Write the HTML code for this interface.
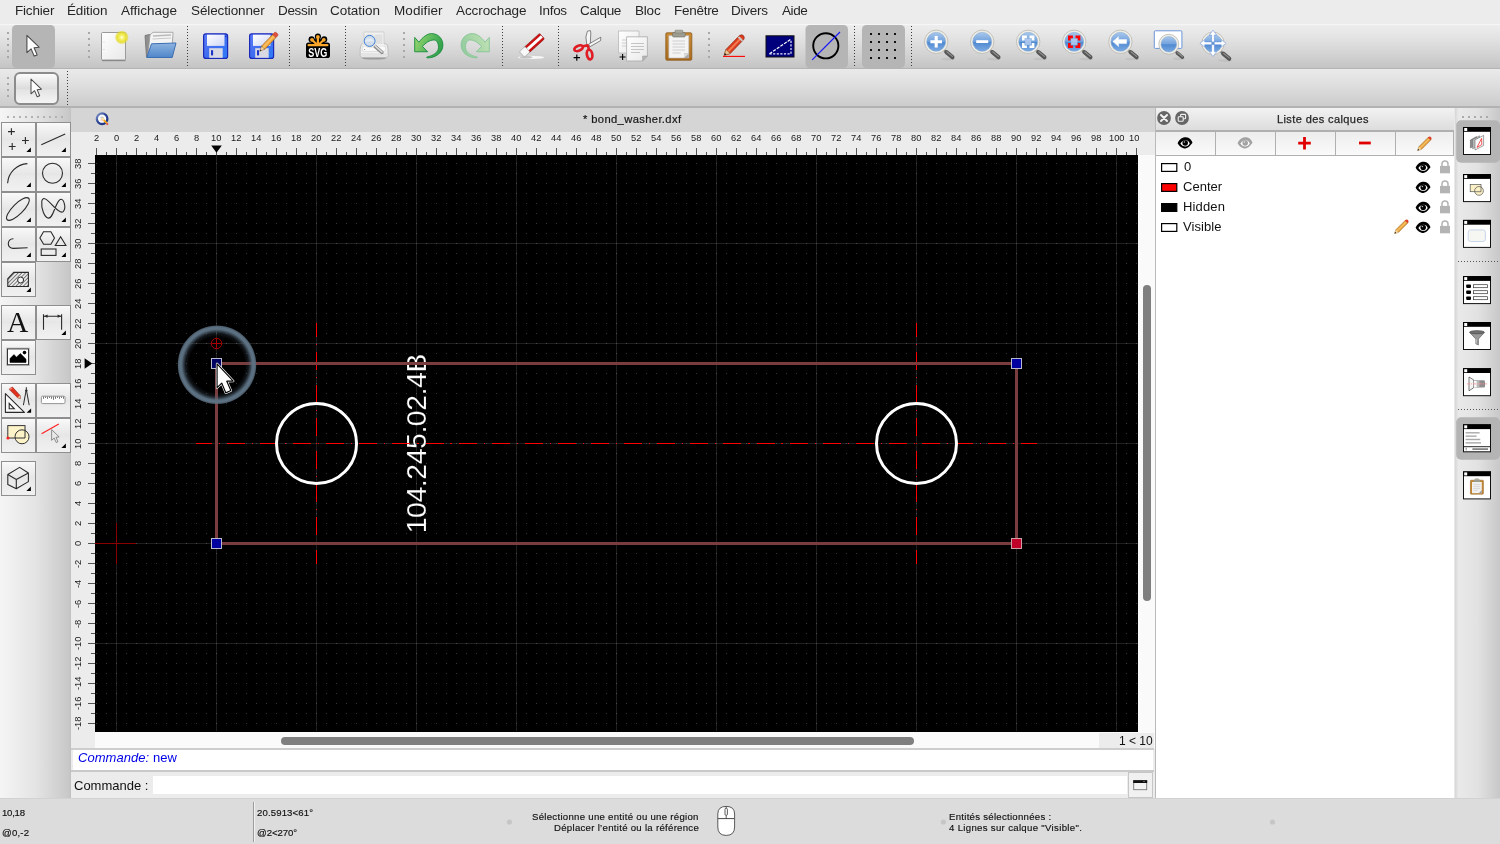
<!DOCTYPE html>
<html><head><meta charset="utf-8"><title>QCAD</title>
<style>
html,body{margin:0;padding:0;}
body{width:1500px;height:844px;overflow:hidden;background:#ececec;position:relative;font-family:"Liberation Sans",sans-serif;}
.t{position:absolute;white-space:nowrap;will-change:transform;}
.a{position:absolute;}
svg{position:absolute;overflow:visible;will-change:transform;}
</style></head><body>
<div class="a" style="left:0;top:0;width:1500px;height:24px;background:#ececec;"></div>
<span class="t" style="left:14.60px;top:1.82px;font-size:13.5px;line-height:18px;color:#262626;font-family:'Liberation Sans',sans-serif;letter-spacing:-0.187px;">Fichier</span>
<span class="t" style="left:67.20px;top:1.82px;font-size:13.5px;line-height:18px;color:#262626;font-family:'Liberation Sans',sans-serif;letter-spacing:-0.140px;">Édition</span>
<span class="t" style="left:121.00px;top:1.82px;font-size:13.5px;line-height:18px;color:#262626;font-family:'Liberation Sans',sans-serif;letter-spacing:-0.005px;">Affichage</span>
<span class="t" style="left:190.70px;top:1.82px;font-size:13.5px;line-height:18px;color:#262626;font-family:'Liberation Sans',sans-serif;letter-spacing:-0.121px;">Sélectionner</span>
<span class="t" style="left:277.80px;top:1.82px;font-size:13.5px;line-height:18px;color:#262626;font-family:'Liberation Sans',sans-serif;letter-spacing:-0.344px;">Dessin</span>
<span class="t" style="left:330.40px;top:1.82px;font-size:13.5px;line-height:18px;color:#262626;font-family:'Liberation Sans',sans-serif;letter-spacing:-0.048px;">Cotation</span>
<span class="t" style="left:393.50px;top:1.82px;font-size:13.5px;line-height:18px;color:#262626;font-family:'Liberation Sans',sans-serif;letter-spacing:0.085px;">Modifier</span>
<span class="t" style="left:455.70px;top:1.82px;font-size:13.5px;line-height:18px;color:#262626;font-family:'Liberation Sans',sans-serif;letter-spacing:-0.089px;">Accrochage</span>
<span class="t" style="left:539.30px;top:1.82px;font-size:13.5px;line-height:18px;color:#262626;font-family:'Liberation Sans',sans-serif;letter-spacing:-0.294px;">Infos</span>
<span class="t" style="left:580.30px;top:1.82px;font-size:13.5px;line-height:18px;color:#262626;font-family:'Liberation Sans',sans-serif;letter-spacing:-0.280px;">Calque</span>
<span class="t" style="left:634.60px;top:1.82px;font-size:13.5px;line-height:18px;color:#262626;font-family:'Liberation Sans',sans-serif;letter-spacing:-0.191px;">Bloc</span>
<span class="t" style="left:673.60px;top:1.82px;font-size:13.5px;line-height:18px;color:#262626;font-family:'Liberation Sans',sans-serif;letter-spacing:-0.275px;">Fenêtre</span>
<span class="t" style="left:731.40px;top:1.82px;font-size:13.5px;line-height:18px;color:#262626;font-family:'Liberation Sans',sans-serif;letter-spacing:-0.259px;">Divers</span>
<span class="t" style="left:781.60px;top:1.82px;font-size:13.5px;line-height:18px;color:#262626;font-family:'Liberation Sans',sans-serif;letter-spacing:-0.380px;">Aide</span>
<div class="a" style="left:0;top:24px;width:1500px;height:44px;background:linear-gradient(#ededed 0%,#e3e3e3 30%,#d2d2d2 70%,#c4c4c4 100%);border-top:1px solid #f6f6f6;box-sizing:border-box;"></div>
<div class="a" style="left:0;top:68px;width:1500px;height:1px;background:#b4b4b4;"></div>
<div class="a" style="left:0;top:69px;width:1500px;height:38px;background:linear-gradient(#eaeaea 0%,#dfdfdf 40%,#cbcbcb 100%);"></div>
<div class="a" style="left:0;top:106px;width:1500px;height:2px;background:#b2b2b2;"></div>
<div class="a" style="left:0;top:108px;width:71.2px;height:690px;background:linear-gradient(90deg,#f5f5f5,#e4e4e4 50%,#c8c8c8 97%,#c0c0c0);"></div>
<div class="a" style="left:71.2px;top:108px;width:1083.8px;height:24px;background:#d5d5d5;"></div>
<span class="t" style="left:582.70px;top:112.22px;font-size:11.2px;line-height:15px;color:#161616;font-family:'Liberation Sans',sans-serif;letter-spacing:0.373px;-webkit-text-stroke:0.2px #161616;">* bond_washer.dxf</span>
<svg style="left:90px;top:108px" width="28" height="24"><defs><linearGradient id="qring" x1="0" y1="0" x2="1" y2="1"><stop offset="0" stop-color="#8a9ccc"/><stop offset="0.45" stop-color="#2a4594"/><stop offset="1" stop-color="#1a3282"/></linearGradient></defs><circle cx="12.1" cy="10.7" r="5.3" fill="#fafafa" stroke="url(#qring)" stroke-width="2.3"/><path d="M10 9.6 h4 M12 8 v3.4" stroke="#aaa" stroke-width="0.5"/><path d="M10.4 12 h2.6" stroke="#e88" stroke-width="0.5"/><path d="M12.6 11 L17 15.4" stroke="#f2a51e" stroke-width="1.9" stroke-linecap="round"/><path d="M12.4 10.8 L13.4 11.8" stroke="#fbe9b0" stroke-width="1.6" stroke-linecap="round"/><circle cx="17.3" cy="16.1" r="1.15" fill="#e35a5a"/></svg>
<div class="a" style="left:71.2px;top:132px;width:1083.8px;height:23px;background:#ececec;"></div>
<div class="a" style="left:71.2px;top:132px;width:23.8px;height:617px;background:#ececec;"></div>
<div class="a" style="left:1138px;top:155px;width:17px;height:594px;background:#fafafa;"></div>
<div class="a" style="left:95px;top:731px;width:1043px;height:18px;background:#fafafa;"></div>
<div class="a" style="left:95px;top:155px;width:1043px;height:577px;background:#000;"></div>
<div class="a" style="left:0;top:798px;width:1500px;height:46px;background:#dcdcdc;"></div>
<svg style="left:0;top:0" width="1500" height="108"><defs>
<linearGradient id="btn2" x1="0" y1="0" x2="0" y2="1"><stop offset="0" stop-color="#fefefe"/><stop offset="0.5" stop-color="#dcdcdc"/><stop offset="0.55" stop-color="#e4e4e4"/><stop offset="1" stop-color="#f6f6f6"/></linearGradient>
<linearGradient id="paper" x1="0" y1="0" x2="1" y2="1"><stop offset="0" stop-color="#ffffff"/><stop offset="1" stop-color="#e8e8e8"/></linearGradient>
<radialGradient id="yglow"><stop offset="0" stop-color="#ffffe8"/><stop offset="0.25" stop-color="#f8f47a"/><stop offset="0.6" stop-color="#ebe330" stop-opacity="0.95"/><stop offset="0.85" stop-color="#e2d820" stop-opacity="0.6"/><stop offset="1" stop-color="#e0d400" stop-opacity="0"/></radialGradient>
<linearGradient id="folderb" x1="0" y1="0" x2="0" y2="1"><stop offset="0" stop-color="#8fb4e0"/><stop offset="1" stop-color="#4f86c9"/></linearGradient>
<linearGradient id="flop" x1="0" y1="0" x2="1" y2="1"><stop offset="0" stop-color="#5d7cf5"/><stop offset="0.5" stop-color="#3f6df0"/><stop offset="1" stop-color="#2d7df8"/></linearGradient>
<linearGradient id="floplabel" x1="0" y1="0" x2="1" y2="1"><stop offset="0" stop-color="#ffffff"/><stop offset="1" stop-color="#cfd6f6"/></linearGradient>
<linearGradient id="undog" x1="0" y1="0.3" x2="1" y2="0.7"><stop offset="0" stop-color="#93d36c"/><stop offset="0.55" stop-color="#52b55a"/><stop offset="1" stop-color="#2a9e48"/></linearGradient>
<linearGradient id="redog" x1="0" y1="0.3" x2="1" y2="0.7"><stop offset="0" stop-color="#bfe0b4"/><stop offset="0.55" stop-color="#a6d5a6"/><stop offset="1" stop-color="#90c99c"/></linearGradient>
<radialGradient id="lens" cx="0.5" cy="0.3" r="0.8"><stop offset="0" stop-color="#9fc2ea"/><stop offset="0.6" stop-color="#5b93d6"/><stop offset="1" stop-color="#3f7bc7"/></radialGradient>
<linearGradient id="lens2" x1="0" y1="0" x2="0" y2="1"><stop offset="0" stop-color="#a9c8ec"/><stop offset="0.5" stop-color="#6fa0dc"/><stop offset="0.52" stop-color="#5089d0"/><stop offset="1" stop-color="#7aaae2"/></linearGradient>
<linearGradient id="clip" x1="0" y1="0" x2="0" y2="1"><stop offset="0" stop-color="#c98a35"/><stop offset="1" stop-color="#a8691c"/></linearGradient>
</defs><rect x="12" y="25" width="43" height="43" rx="4.5" fill="#b5b5b5"/><rect x="805.5" y="25" width="42.5" height="43" rx="4.5" fill="#b5b5b5"/><rect x="862" y="25" width="43" height="43" rx="4.5" fill="#b5b5b5"/><rect x="15" y="73" width="43" height="31" rx="5" fill="url(#btn2)" stroke="#8c8c8c" stroke-width="2"/><rect x="7" y="32" width="2" height="2" fill="#a8a8a8"/><rect x="7" y="38" width="2" height="2" fill="#a8a8a8"/><rect x="7" y="44" width="2" height="2" fill="#a8a8a8"/><rect x="7" y="50" width="2" height="2" fill="#a8a8a8"/><rect x="7" y="56" width="2" height="2" fill="#a8a8a8"/><rect x="88" y="32" width="2" height="2" fill="#a8a8a8"/><rect x="88" y="38" width="2" height="2" fill="#a8a8a8"/><rect x="88" y="44" width="2" height="2" fill="#a8a8a8"/><rect x="88" y="50" width="2" height="2" fill="#a8a8a8"/><rect x="88" y="56" width="2" height="2" fill="#a8a8a8"/><rect x="403" y="32" width="2" height="2" fill="#a8a8a8"/><rect x="403" y="38" width="2" height="2" fill="#a8a8a8"/><rect x="403" y="44" width="2" height="2" fill="#a8a8a8"/><rect x="403" y="50" width="2" height="2" fill="#a8a8a8"/><rect x="403" y="56" width="2" height="2" fill="#a8a8a8"/><rect x="708" y="32" width="2" height="2" fill="#a8a8a8"/><rect x="708" y="38" width="2" height="2" fill="#a8a8a8"/><rect x="708" y="44" width="2" height="2" fill="#a8a8a8"/><rect x="708" y="50" width="2" height="2" fill="#a8a8a8"/><rect x="708" y="56" width="2" height="2" fill="#a8a8a8"/><rect x="7" y="77" width="2" height="2" fill="#a8a8a8"/><rect x="7" y="83" width="2" height="2" fill="#a8a8a8"/><rect x="7" y="89" width="2" height="2" fill="#a8a8a8"/><rect x="7" y="95" width="2" height="2" fill="#a8a8a8"/><line x1="187.5" y1="26" x2="187.5" y2="66" stroke="#3c3c3c" stroke-width="1" stroke-dasharray="1 2" shape-rendering="crispEdges"/><line x1="289.5" y1="26" x2="289.5" y2="66" stroke="#3c3c3c" stroke-width="1" stroke-dasharray="1 2" shape-rendering="crispEdges"/><line x1="345.5" y1="26" x2="345.5" y2="66" stroke="#3c3c3c" stroke-width="1" stroke-dasharray="1 2" shape-rendering="crispEdges"/><line x1="502.5" y1="26" x2="502.5" y2="66" stroke="#3c3c3c" stroke-width="1" stroke-dasharray="1 2" shape-rendering="crispEdges"/><line x1="558.5" y1="26" x2="558.5" y2="66" stroke="#3c3c3c" stroke-width="1" stroke-dasharray="1 2" shape-rendering="crispEdges"/><line x1="854.5" y1="26" x2="854.5" y2="66" stroke="#3c3c3c" stroke-width="1" stroke-dasharray="1 2" shape-rendering="crispEdges"/><line x1="911.5" y1="26" x2="911.5" y2="66" stroke="#3c3c3c" stroke-width="1" stroke-dasharray="1 2" shape-rendering="crispEdges"/><line x1="67.5" y1="71" x2="67.5" y2="105" stroke="#3c3c3c" stroke-width="1" stroke-dasharray="1 2" shape-rendering="crispEdges"/><path transform="translate(26.9,35.3) scale(1.0)" d="M0 0 L0 17.3 L4.2 13.6 L7.3 20.8 L10.2 19.6 L7.2 12.4 L12.2 11.9 Z" fill="#fff" stroke="#4a4a4a" stroke-width="1.1" stroke-linejoin="round"/><path transform="translate(31,79.1) scale(0.85)" d="M0 0 L0 17.3 L4.2 13.6 L7.3 20.8 L10.2 19.6 L7.2 12.4 L12.2 11.9 Z" fill="#fff" stroke="#4a4a4a" stroke-width="1.1764705882352942" stroke-linejoin="round"/><g><rect x="101.5" y="32.5" width="24" height="27.5" rx="1" fill="url(#paper)" stroke="#9a9a9a" stroke-width="1"/><path d="M102 60.6 h23.5" stroke="#8a8a8a" stroke-width="1.2"/><rect x="103.3" y="41.5" width="1.2" height="0.8" fill="#c8c8c8"/><rect x="103.3" y="49" width="1.2" height="0.8" fill="#c8c8c8"/><circle cx="121.8" cy="37.4" r="7" fill="url(#yglow)"/></g><g>
<path d="M145 35.5 L149.5 34.5 L152 36 L172 36 L172 57 L146.5 57 Z" fill="#8f8f8f" stroke="#6f6f6f" stroke-width="0.8"/>
<path d="M150 35 L153 32.3 L173 32.3 L172 52 L148 55 Z" fill="#f4f4f4" stroke="#9a9a9a" stroke-width="0.8"/>
<path d="M153 36 L171 35" stroke="#b9b9b9" stroke-width="1.5"/><path d="M152.5 39 L171 38" stroke="#c9c9c9" stroke-width="1.2"/>
<path d="M151.5 43.8 L176 43 L172.2 57.5 L146.8 57.5 Z" fill="url(#folderb)" stroke="#3c6eb4" stroke-width="1" stroke-linejoin="round"/>
</g><g transform="translate(203,33.2)">
<rect x="0.6" y="0.6" width="24" height="24.6" rx="2.2" fill="url(#flop)" stroke="#1c28b8" stroke-width="1.2"/>
<rect x="4" y="1.5" width="17.5" height="11.2" fill="url(#floplabel)"/>
<rect x="22.2" y="2.5" width="1.1" height="1.5" fill="#1c28b8"/>
<rect x="6.2" y="15" width="13.5" height="9.6" fill="#d9d9e4"/>
<rect x="8" y="17" width="2.1" height="5.2" fill="#1c35c8"/>
</g><g transform="translate(249,33.2)">
<rect x="0.6" y="0.6" width="24" height="24.6" rx="2.2" fill="url(#flop)" stroke="#1c28b8" stroke-width="1.2"/>
<rect x="4" y="1.5" width="17.5" height="11.2" fill="url(#floplabel)"/>
<rect x="22.2" y="2.5" width="1.1" height="1.5" fill="#1c28b8"/>
<rect x="6.2" y="15" width="13.5" height="9.6" fill="#d9d9e4"/>
<rect x="8" y="17" width="2.1" height="5.2" fill="#1c35c8"/>
</g><g transform="translate(259.8,51.2) rotate(-46.3)">
<path d="M0 0 L5.00 -2.3 L5.00 2.3 Z" fill="#f0d8b0" stroke="#8a5a1a" stroke-width="0.5" stroke-linejoin="round"/>
<path d="M0 0 L1.75 -0.80 L1.75 0.80 Z" fill="#222"/>
<rect x="5.00" y="-2.3" width="16.00" height="4.6" fill="#f2a33a" stroke="#8a5a1a" stroke-width="0.5"/>
<rect x="5.00" y="-1.03" width="16.00" height="1.84" fill="#f8c060"/>
<path d="M21.00 -2.3 L23.50 -2.3 Q25.00 -2.3 25.00 0 Q25.00 2.3 23.50 2.3 L21.00 2.3 Z" fill="#e0503a" stroke="#a83020" stroke-width="0.4"/>
</g><g>
<g fill="#000" stroke="#000">
<rect x="306" y="42.4" width="24" height="15.6" rx="2.6" stroke="none"/>
<circle cx="317.9" cy="36.6" r="3.05" stroke="none"/><circle cx="311.6" cy="39.4" r="3.05" stroke="none"/><circle cx="324.2" cy="39.4" r="3.05" stroke="none"/>
<path d="M317.9 36.6 V45 M311.6 39.4 L317.9 45.4 M324.2 39.4 L317.9 45.4" stroke-width="5" fill="none"/>
</g>
<g fill="#f9a62b" stroke="#f9a62b">
<circle cx="317.9" cy="36.9" r="1.9" stroke="none"/><circle cx="312" cy="39.8" r="1.9" stroke="none"/><circle cx="323.8" cy="39.8" r="1.9" stroke="none"/>
<path d="M317.9 36.9 V45 M312 39.8 L317.4 45 M323.8 39.8 L318.4 45" stroke-width="2.2" fill="none"/>
<path d="M308.6 45.2 H327.4" stroke-width="2.2" stroke-linecap="round" fill="none"/>
<path d="M312.5 45 Q317.9 41 323.5 45 Z" stroke="none"/>
</g>
<text transform="translate(308.3,57) scale(0.66,1)" font-family="Liberation Sans, sans-serif" font-weight="bold" font-size="13.7" fill="#fff">SVG</text>
</g><g>
<ellipse cx="374" cy="58" rx="12.5" ry="1.6" fill="#8a8a8a" opacity="0.75"/>
<rect x="364" y="32" width="20" height="14" rx="0.8" fill="#f2f2f2" stroke="#c4c4c4" stroke-width="0.7"/>
<rect x="375" y="34.4" width="7.4" height="9" fill="#e0e0e0"/>
<path d="M362.6 43.8 L385.4 43.8 Q387 44 387.6 46 L388 49 L388 55.4 Q388 57.4 386 57.4 L362.2 57.4 Q360.2 57.4 360.2 55.4 L360.2 49 L360.8 46 Q361.4 44 362.6 43.8 Z" fill="#f1f1f1" stroke="#b4b4b4" stroke-width="0.8"/>
<path d="M362.4 46.4 H385.6 V50 Q385.6 51.4 384 51.4 H364 Q362.4 51.4 362.4 50 Z" fill="#fafafa" stroke="#cfcfcf" stroke-width="0.6"/>
<rect x="364" y="43.4" width="20" height="3.4" fill="#f0f0f0"/>
<rect x="361" y="53" width="26.4" height="3.8" rx="1.2" fill="#e4e4e4"/>
<circle cx="364.6" cy="49.4" r="0.5" fill="#777"/>
<path d="M374.2 45.6 L382 52.4" stroke="#8c8c8c" stroke-width="3.4" stroke-linecap="round"/>
<path d="M375 45.8 L382 52" stroke="#e2e2e2" stroke-width="1.5" stroke-linecap="round"/>
<circle cx="369.6" cy="40.9" r="6.9" fill="#f3f3f0" stroke="#d2d2cc" stroke-width="0.5"/>
<circle cx="369.6" cy="40.9" r="5.5" fill="#cfdcec" stroke="#3b7ad0" stroke-width="1"/>
<path d="M364.8 42 A5 5 0 0 1 374.4 42 Q369.6 40.4 364.8 42 Z" fill="#e4ecf6"/>
</g><path d="M414.7 37.4 L418.9 42.2 C422.5 37.5 427 33.6 431.5 33.6 C438 33.6 442.9 38.6 442.9 45 C442.9 52.5 436 57.9 427.4 57.9 C426.5 57.9 426.4 57.1 427.1 57 C433 55.6 438.5 52.5 438.5 47.4 C438.5 42.5 436.5 40 433.8 40 C429.5 40 425.5 43 422.5 46.5 L427.6 51.75 L414.7 51.75 Z" fill="url(#undog)" stroke="#1a8a3c" stroke-width="0.9" stroke-linejoin="round"/><path transform="translate(904,0) scale(-1,1)" d="M414.7 37.4 L418.9 42.2 C422.5 37.5 427 33.6 431.5 33.6 C438 33.6 442.9 38.6 442.9 45 C442.9 52.5 436 57.9 427.4 57.9 C426.5 57.9 426.4 57.1 427.1 57 C433 55.6 438.5 52.5 438.5 47.4 C438.5 42.5 436.5 40 433.8 40 C429.5 40 425.5 43 422.5 46.5 L427.6 51.75 L414.7 51.75 Z" fill="url(#redog)" stroke="#86c596" stroke-width="0.9" stroke-linejoin="round"/><g>
<ellipse cx="531" cy="57.4" rx="13" ry="1.6" fill="#f6f6f6"/>
<ellipse cx="526" cy="57.2" rx="6.5" ry="1.4" fill="#c4c4c4"/>
<g transform="translate(539.6,33.4) rotate(48)">
<rect x="0" y="0" width="7.4" height="21" rx="1.2" fill="#cc1212" stroke="#8a0c0c" stroke-width="0.6"/>
<rect x="2.3" y="0.3" width="2.8" height="20.6" fill="#fff"/>
<rect x="0" y="19.6" width="7.4" height="7.6" rx="1" fill="#f8f8f8" stroke="#9a9a9a" stroke-width="0.6"/>
</g></g><g>
<path d="M587.4 31.2 L590.4 30.6 L590.8 33 L590.2 45.4 L587 46.6 L585.9 37 Z" fill="#f6f6f6" stroke="#555" stroke-width="0.7" stroke-linejoin="round"/>
<path d="M600.8 37.2 L600.6 40.6 L589.8 46.8 L588.6 44.2 Z" fill="#f6f6f6" stroke="#555" stroke-width="0.7" stroke-linejoin="round"/>
<ellipse cx="578.6" cy="48.2" rx="4.5" ry="2.5" transform="rotate(-22 578.6 48.2)" fill="none" stroke="#e01c24" stroke-width="2.7"/>
<ellipse cx="589.6" cy="54.6" rx="2.7" ry="4.9" transform="rotate(-10 589.6 54.6)" fill="none" stroke="#e01c24" stroke-width="2.7"/>
<path d="M583 46.2 L587.6 45.4 L589 49.4" stroke="#e01c24" stroke-width="2.6" fill="none" stroke-linejoin="round"/>
<path d="M573.6 57.6 h6.4 M576.8 54.4 v6.4" stroke="#000" stroke-width="1.2"/>
</g><g>
<path d="M618.5 31 L639 31 L639 53 L618.5 53 Z" fill="url(#paper)" stroke="#b9b9b9" stroke-width="0.8"/>
<path d="M622 40 h6 M622 43 h6 M622 46 h6" stroke="#d0d0d0" stroke-width="1"/>
<path d="M626.6 36.8 L647.4 36.8 L647.4 56 L642.6 61 L626.6 61 Z" fill="url(#paper)" stroke="#a9a9a9" stroke-width="0.8"/>
<path d="M631 43.5 h13 M631 46.5 h13 M631 49.5 h13 M631 52.5 h9" stroke="#c4c4c4" stroke-width="1"/>
<path d="M647.4 56 L642.6 56 L642.6 61 Z" fill="#b5b5b5" stroke="#999" stroke-width="0.5"/>
<path d="M619.6 57 h6 M622.6 54 v6" stroke="#000" stroke-width="1.1"/>
</g><g>
<rect x="665.8" y="32.8" width="26" height="27.4" rx="1.2" fill="url(#clip)" stroke="#8a5a1a" stroke-width="0.8"/>
<path d="M668.8 35.6 L688.8 35.6 L688.8 58 L668.8 58 Z" fill="#f4f4f4" stroke="#b5b5b5" stroke-width="0.6"/>
<path d="M672.5 41 h12.5 M672.5 44 h12.5 M672.5 47 h12.5 M672.5 50 h12.5 M672.5 53 h8" stroke="#c9c9c9" stroke-width="0.9"/>
<path d="M688.8 53.4 L684 53.4 L684 58 L688.8 58 Z" fill="#a9a9a9"/>
<path d="M684 53.4 L688.8 53.4 L684 58 Z" fill="#dcdcdc"/>
<rect x="672.6" y="32.4" width="12.6" height="4.6" rx="1" fill="#9c9c90" stroke="#6e6e64" stroke-width="0.6"/>
<rect x="675" y="30.2" width="7.8" height="3" rx="0.8" fill="#aaaa9e" stroke="#6e6e64" stroke-width="0.5"/>
</g><g>
<path d="M723 56.4 h22" stroke="#f00" stroke-width="1.1"/>
<path d="M724.2 55.3 L726 49.4 L739.4 35.6 Q741.6 34 743.4 35.6 Q745 37.4 743.8 39.4 L730.2 53.6 Z" fill="#dc3c1e" stroke="#8c2a14" stroke-width="0.7" stroke-linejoin="round"/>
<path d="M727.6 50.6 L740.6 37.2 L742 38.6 L729 52 Z" fill="#f47a50"/>
<path d="M737.6 37.6 L741.8 41.6 L743.2 40.2 L739 36.2 Z" fill="#c9c9c9"/>
<path d="M724.2 55.3 L726 49.4 L730.2 53.6 Z" fill="#e8c898" stroke="#8c5a2a" stroke-width="0.5"/>
<path d="M724.2 55.3 L724.9 53 L726.6 54.6 Z" fill="#111"/>
</g><g>
<rect x="766" y="35.8" width="28" height="21.2" fill="#00007c" stroke="#111" stroke-width="1"/>
<path d="M769.5 53.8 L790.6 39.4" stroke="#fff" stroke-width="1.2" stroke-dasharray="3.2 1.2"/>
<path d="M769.5 53.8 L791 53.8 L791 39.4" fill="none" stroke="#e8e8ff" stroke-width="1.2" stroke-dasharray="2.2 1.4"/>
</g><circle cx="825.8" cy="45.8" r="12.6" fill="none" stroke="#000" stroke-width="1.9"/><path d="M812.2 59.8 L840 32" stroke="#1414ff" stroke-width="1.1"/><rect x="870" y="33" width="2" height="2" fill="#111"/><rect x="870" y="41" width="2" height="2" fill="#111"/><rect x="870" y="49" width="2" height="2" fill="#111"/><rect x="870" y="57" width="2" height="2" fill="#111"/><rect x="878" y="33" width="2" height="2" fill="#111"/><rect x="878" y="41" width="2" height="2" fill="#111"/><rect x="878" y="49" width="2" height="2" fill="#111"/><rect x="878" y="57" width="2" height="2" fill="#111"/><rect x="886" y="33" width="2" height="2" fill="#111"/><rect x="886" y="41" width="2" height="2" fill="#111"/><rect x="886" y="49" width="2" height="2" fill="#111"/><rect x="886" y="57" width="2" height="2" fill="#111"/><rect x="894" y="33" width="2" height="2" fill="#111"/><rect x="894" y="41" width="2" height="2" fill="#111"/><rect x="894" y="49" width="2" height="2" fill="#111"/><rect x="894" y="57" width="2" height="2" fill="#111"/><g>
<ellipse cx="948.2" cy="59.099999999999994" rx="7.0" ry="1.4" fill="#b9b9b9" opacity="0.6"/>
<path d="M943.2 49.4 L947.2 52.8" stroke="#8a8a8a" stroke-width="2.4"/>
<path d="M946.4000000000001 52.199999999999996 L952.4000000000001 57.199999999999996" stroke="#565656" stroke-width="4.2" stroke-linecap="round"/>
<path d="M946.8000000000001 51.8 L952.4000000000001 56.4" stroke="#8e8e8e" stroke-width="1.2" stroke-linecap="round"/>
<circle cx="936.2" cy="41.8" r="11.7" fill="#efefe8" stroke="#b0aea6" stroke-width="0.7"/>
<circle cx="936.2" cy="41.8" r="9.5" fill="url(#lens2)" stroke="#86a6cf" stroke-width="0.5"/>
<path d="M930.4 41.8 h11.6 M936.2 36 v11.6" stroke="#fff" stroke-width="3.1"/></g><g>
<ellipse cx="994.2" cy="59.099999999999994" rx="7.0" ry="1.4" fill="#b9b9b9" opacity="0.6"/>
<path d="M989.2 49.4 L993.2 52.8" stroke="#8a8a8a" stroke-width="2.4"/>
<path d="M992.4000000000001 52.199999999999996 L998.4000000000001 57.199999999999996" stroke="#565656" stroke-width="4.2" stroke-linecap="round"/>
<path d="M992.8000000000001 51.8 L998.4000000000001 56.4" stroke="#8e8e8e" stroke-width="1.2" stroke-linecap="round"/>
<circle cx="982.2" cy="41.8" r="11.7" fill="#efefe8" stroke="#b0aea6" stroke-width="0.7"/>
<circle cx="982.2" cy="41.8" r="9.5" fill="url(#lens2)" stroke="#86a6cf" stroke-width="0.5"/>
<path d="M976.2 41.6 h12" stroke="#fff" stroke-width="2.8"/></g><g>
<ellipse cx="1040.2" cy="59.099999999999994" rx="7.0" ry="1.4" fill="#b9b9b9" opacity="0.6"/>
<path d="M1035.2 49.4 L1039.2 52.8" stroke="#8a8a8a" stroke-width="2.4"/>
<path d="M1038.4 52.199999999999996 L1044.4 57.199999999999996" stroke="#565656" stroke-width="4.2" stroke-linecap="round"/>
<path d="M1038.8 51.8 L1044.4 56.4" stroke="#8e8e8e" stroke-width="1.2" stroke-linecap="round"/>
<circle cx="1028.2" cy="41.8" r="11.7" fill="#efefe8" stroke="#b0aea6" stroke-width="0.7"/>
<circle cx="1028.2" cy="41.8" r="9.5" fill="url(#lens2)" stroke="#86a6cf" stroke-width="0.5"/>
<rect x="1025.1000000000001" y="38.699999999999996" width="6.2" height="6.2" fill="#b4cdee" opacity="0.85"/><path d="M1023.3000000000001 40.5 V36.9 H1026.9 M1029.5 36.9 H1033.1000000000001 V40.5 M1033.1000000000001 43.099999999999994 V46.699999999999996 H1029.5 M1026.9 46.699999999999996 H1023.3000000000001 V43.099999999999994" fill="none" stroke="#fff" stroke-width="2.6"/></g><g>
<ellipse cx="1086.2" cy="59.099999999999994" rx="7.0" ry="1.4" fill="#b9b9b9" opacity="0.6"/>
<path d="M1081.2 49.4 L1085.2 52.8" stroke="#8a8a8a" stroke-width="2.4"/>
<path d="M1084.4 52.199999999999996 L1090.4 57.199999999999996" stroke="#565656" stroke-width="4.2" stroke-linecap="round"/>
<path d="M1084.8 51.8 L1090.4 56.4" stroke="#8e8e8e" stroke-width="1.2" stroke-linecap="round"/>
<circle cx="1074.2" cy="41.8" r="11.7" fill="#efefe8" stroke="#b0aea6" stroke-width="0.7"/>
<circle cx="1074.2" cy="41.8" r="9.5" fill="url(#lens2)" stroke="#86a6cf" stroke-width="0.5"/>
<rect x="1071.1000000000001" y="38.699999999999996" width="6.2" height="6.2" fill="#b4cdee" opacity="0.85"/><path d="M1069.3 40.5 V36.9 H1072.9 M1075.5 36.9 H1079.1000000000001 V40.5 M1079.1000000000001 43.099999999999994 V46.699999999999996 H1075.5 M1072.9 46.699999999999996 H1069.3 V43.099999999999994" fill="none" stroke="#f00" stroke-width="2.6"/></g><g>
<ellipse cx="1132.4" cy="59.099999999999994" rx="7.0" ry="1.4" fill="#b9b9b9" opacity="0.6"/>
<path d="M1127.4 49.4 L1131.4 52.8" stroke="#8a8a8a" stroke-width="2.4"/>
<path d="M1130.6000000000001 52.199999999999996 L1136.6000000000001 57.199999999999996" stroke="#565656" stroke-width="4.2" stroke-linecap="round"/>
<path d="M1131.0 51.8 L1136.6000000000001 56.4" stroke="#8e8e8e" stroke-width="1.2" stroke-linecap="round"/>
<circle cx="1120.4" cy="41.8" r="11.7" fill="#efefe8" stroke="#b0aea6" stroke-width="0.7"/>
<circle cx="1120.4" cy="41.8" r="9.5" fill="url(#lens2)" stroke="#86a6cf" stroke-width="0.5"/>
<path d="M1112.8 41.6 L1118.6 36.6 L1118.6 39.6 L1126.6 39.6 L1126.6 43.6 L1118.6 43.6 L1118.6 46.6 Z" fill="#fff" stroke="#e8eefa" stroke-width="0.6" stroke-linejoin="round"/></g><rect x="1154.3" y="30.8" width="27.6" height="17.6" rx="1" fill="#fff" stroke="#5b8bd6" stroke-width="0.9"/><g>
<ellipse cx="1178.8799999999999" cy="58.831999999999994" rx="5.88" ry="1.4" fill="#b9b9b9" opacity="0.6"/>
<path d="M1174.68 50.684 L1178.04 53.54" stroke="#8a8a8a" stroke-width="2.4"/>
<path d="M1177.368 53.036 L1182.408 57.236" stroke="#565656" stroke-width="3.528" stroke-linecap="round"/>
<path d="M1177.704 52.699999999999996 L1182.408 56.56399999999999" stroke="#8e8e8e" stroke-width="1.2" stroke-linecap="round"/>
<circle cx="1168.8" cy="44.3" r="10.0" fill="#efefe8" stroke="#b0aea6" stroke-width="0.7"/>
<circle cx="1168.8" cy="44.3" r="7.8" fill="url(#lens2)" stroke="#86a6cf" stroke-width="0.5"/>
</g><g>
<ellipse cx="1225.0" cy="60.599999999999994" rx="7.0" ry="1.4" fill="#b9b9b9" opacity="0.6"/>
<path d="M1220.0 50.9 L1224.0 54.3" stroke="#8a8a8a" stroke-width="2.4"/>
<path d="M1223.2 53.699999999999996 L1229.2 58.699999999999996" stroke="#565656" stroke-width="4.2" stroke-linecap="round"/>
<path d="M1223.6 53.3 L1229.2 57.9" stroke="#8e8e8e" stroke-width="1.2" stroke-linecap="round"/>
<circle cx="1213" cy="43.3" r="11.2" fill="#efefe8" stroke="#b0aea6" stroke-width="0.7"/>
<circle cx="1213" cy="43.3" r="9" fill="url(#lens2)" stroke="#86a6cf" stroke-width="0.5"/>
<path transform="rotate(0 1213 43.3)" d="M1213 30.2 L1216.6 35 L1214.4 35 L1214.4 42 L1211.6 42 L1211.6 35 L1209.4 35 Z" fill="#fff" stroke="#5b8bd6" stroke-width="0.5"/><path transform="rotate(90 1213 43.3)" d="M1213 30.2 L1216.6 35 L1214.4 35 L1214.4 42 L1211.6 42 L1211.6 35 L1209.4 35 Z" fill="#fff" stroke="#5b8bd6" stroke-width="0.5"/><path transform="rotate(180 1213 43.3)" d="M1213 30.2 L1216.6 35 L1214.4 35 L1214.4 42 L1211.6 42 L1211.6 35 L1209.4 35 Z" fill="#fff" stroke="#5b8bd6" stroke-width="0.5"/><path transform="rotate(270 1213 43.3)" d="M1213 30.2 L1216.6 35 L1214.4 35 L1214.4 42 L1211.6 42 L1211.6 35 L1209.4 35 Z" fill="#fff" stroke="#5b8bd6" stroke-width="0.5"/></g></svg>
<svg style="left:0;top:0" width="76" height="800"><defs><linearGradient id="lbtn" x1="0" y1="0" x2="0" y2="1"><stop offset="0" stop-color="#fbfbfb"/><stop offset="0.12" stop-color="#f4f4f4"/><stop offset="0.5" stop-color="#e6e6e6"/><stop offset="0.55" stop-color="#e9e9e9"/><stop offset="1" stop-color="#f1f1f1"/></linearGradient><pattern id="hatch" width="2.6" height="2.6" patternUnits="userSpaceOnUse" patternTransform="rotate(-45)"><rect width="2.6" height="2.6" fill="#e8e8e8"/><rect width="2.6" height="0.7" fill="#555"/></pattern></defs><rect x="7" y="116" width="2" height="2" fill="#b2b2b2"/><rect x="13" y="116" width="2" height="2" fill="#b2b2b2"/><rect x="19" y="116" width="2" height="2" fill="#b2b2b2"/><rect x="25" y="116" width="2" height="2" fill="#b2b2b2"/><rect x="31" y="116" width="2" height="2" fill="#b2b2b2"/><rect x="37" y="116" width="2" height="2" fill="#b2b2b2"/><rect x="43" y="116" width="2" height="2" fill="#b2b2b2"/><rect x="49" y="116" width="2" height="2" fill="#b2b2b2"/><rect x="55" y="116" width="2" height="2" fill="#b2b2b2"/><rect x="61" y="116" width="2" height="2" fill="#b2b2b2"/><rect x="1.5" y="122.5" width="34" height="34" fill="url(#lbtn)" stroke="#8f8f8f" stroke-width="1"/><path d="M30.9 147.6 L30.9 151.9 L26.4 151.9 Z" fill="#000"/><rect x="36.5" y="122.5" width="34" height="34" fill="url(#lbtn)" stroke="#8f8f8f" stroke-width="1"/><path d="M65.9 147.6 L65.9 151.9 L61.400000000000006 151.9 Z" fill="#000"/><rect x="1.5" y="157.5" width="34" height="34" fill="url(#lbtn)" stroke="#8f8f8f" stroke-width="1"/><path d="M30.9 182.6 L30.9 186.9 L26.4 186.9 Z" fill="#000"/><rect x="36.5" y="157.5" width="34" height="34" fill="url(#lbtn)" stroke="#8f8f8f" stroke-width="1"/><path d="M65.9 182.6 L65.9 186.9 L61.400000000000006 186.9 Z" fill="#000"/><rect x="1.5" y="192.5" width="34" height="34" fill="url(#lbtn)" stroke="#8f8f8f" stroke-width="1"/><path d="M30.9 217.6 L30.9 221.9 L26.4 221.9 Z" fill="#000"/><rect x="36.5" y="192.5" width="34" height="34" fill="url(#lbtn)" stroke="#8f8f8f" stroke-width="1"/><path d="M65.9 217.6 L65.9 221.9 L61.400000000000006 221.9 Z" fill="#000"/><rect x="1.5" y="227.5" width="34" height="34" fill="url(#lbtn)" stroke="#8f8f8f" stroke-width="1"/><path d="M30.9 252.59999999999997 L30.9 256.9 L26.4 256.9 Z" fill="#000"/><rect x="36.5" y="227.5" width="34" height="34" fill="url(#lbtn)" stroke="#8f8f8f" stroke-width="1"/><path d="M65.9 252.59999999999997 L65.9 256.9 L61.400000000000006 256.9 Z" fill="#000"/><rect x="1.5" y="262.5" width="34" height="34" fill="url(#lbtn)" stroke="#8f8f8f" stroke-width="1"/><path d="M30.9 287.59999999999997 L30.9 291.9 L26.4 291.9 Z" fill="#000"/><rect x="1.5" y="305.5" width="34" height="34" fill="url(#lbtn)" stroke="#8f8f8f" stroke-width="1"/><rect x="36.5" y="305.5" width="34" height="34" fill="url(#lbtn)" stroke="#8f8f8f" stroke-width="1"/><path d="M65.9 330.59999999999997 L65.9 334.9 L61.400000000000006 334.9 Z" fill="#000"/><rect x="1.5" y="340.5" width="34" height="34" fill="url(#lbtn)" stroke="#8f8f8f" stroke-width="1"/><rect x="1.5" y="383.5" width="34" height="34" fill="url(#lbtn)" stroke="#8f8f8f" stroke-width="1"/><path d="M31.1 408.4 L31.1 412.7 L26.6 412.7 Z" fill="#000"/><rect x="36.5" y="383.5" width="34" height="34" fill="url(#lbtn)" stroke="#8f8f8f" stroke-width="1"/><rect x="1.5" y="418.5" width="34" height="34" fill="url(#lbtn)" stroke="#8f8f8f" stroke-width="1"/><rect x="36.5" y="418.5" width="34" height="34" fill="url(#lbtn)" stroke="#8f8f8f" stroke-width="1"/><path d="M65.9 443.59999999999997 L65.9 447.9 L61.400000000000006 447.9 Z" fill="#000"/><rect x="1.5" y="461.5" width="34" height="34" fill="url(#lbtn)" stroke="#8f8f8f" stroke-width="1"/><path d="M30.9 486.59999999999997 L30.9 490.9 L26.4 490.9 Z" fill="#000"/><path d="M8.0 131.6 h6.8 M11.4 128.2 v6.8" fill="none" stroke="#2a2a2a" stroke-width="1.1"/><path d="M22.0 140.5 h6.8 M25.4 137.1 v6.8" fill="none" stroke="#2a2a2a" stroke-width="1.1"/><path d="M8.799999999999999 146.5 h6.8 M12.2 143.1 v6.8" fill="none" stroke="#2a2a2a" stroke-width="1.1"/><path d="M41.3 144.8 L65.2 134" fill="none" stroke="#2a2a2a" stroke-width="1.1"/><path d="M7.6 183.2 A21 21 0 0 1 27.4 163.6" fill="none" stroke="#2a2a2a" stroke-width="1.1"/><circle cx="52.5" cy="173.2" r="10" fill="none" stroke="#2a2a2a" stroke-width="1.1"/><ellipse cx="17.9" cy="209" rx="15.2" ry="5.2" transform="rotate(-45 17.9 209)" fill="none" stroke="#2a2a2a" stroke-width="1.1"/><path d="M41.8 201.2 C44 190.5 58 216 63.2 211.6 C66.6 208 63.6 195.6 59.2 200.4 C54 206.4 53 219.6 47.8 218 C44.4 216.6 41 209 41.8 201.2 Z" fill="none" stroke="#2a2a2a" stroke-width="1.1"/><path d="M13.4 238.8 C6.8 238.4 6.4 248.6 13.4 248.4 L27.6 247.8" fill="none" stroke="#2a2a2a" stroke-width="1.1"/><polygon points="54.5,238.0 50.9,244.3 43.6,244.3 39.9,238.0 43.5,231.7 50.9,231.7" fill="none" stroke="#2a2a2a" stroke-width="1.1"/><path d="M60.6 236.8 L65.9 245.5 L55.3 245.5 Z" fill="none" stroke="#2a2a2a" stroke-width="1.1"/><rect x="41.2" y="249" width="14.8" height="6.4" fill="none" stroke="#2a2a2a" stroke-width="1.1"/><path d="M7.8 286.5 L7.8 278.8 L13.8 272.4 L28.4 272.4 L28.4 286.5 Z" fill="url(#hatch)" stroke="#2a2a2a" stroke-width="1.1"/><circle cx="20.6" cy="280" r="3" fill="#f4f4f4" stroke="#2a2a2a" stroke-width="1"/><path d="M43.5 314.2 V329.8 M61.6 314.2 V329.8 M44 316.2 H61" fill="none" stroke="#2a2a2a" stroke-width="1.1"/><path d="M44 316.2 L47.6 314.6 L47.6 317.8 Z M61.2 316.2 L57.6 314.6 L57.6 317.8 Z" fill="#2a2a2a"/><rect x="6.6" y="348" width="22.8" height="17.6" fill="none" stroke="#bdbdbd" stroke-width="0.8"/><rect x="7.5" y="348.9" width="21" height="15.8" fill="#fff" stroke="#333" stroke-width="1"/><path d="M10 362.4 L10 358.6 L14 354.6 L16.4 357.2 L20.4 353.6 L26 359.2 L26 362.4 Z" fill="#000" stroke="#000" stroke-width="0.6" stroke-linejoin="round"/><circle cx="24.5" cy="352.6" r="1.8" fill="#000"/><path d="M5.4 393.6 L5.4 412.4 L24.4 412.4 Z" fill="#f8f8f8" stroke="#2a2a2a" stroke-width="1.1" stroke-linejoin="round"/><path d="M9.2 403.4 L9.2 408.8 L14.3 408.8 Z" fill="none" stroke="#2a2a2a" stroke-width="1.1"/><path d="M10 388.4 L12.4 387 L20 395.4 L20.4 398.6 L17.4 397.6 L9.4 389.6 Z" fill="#e0301e" stroke="#8c2010" stroke-width="0.6"/><path d="M20.4 398.6 L17.6 397.6 L19.8 395.6 Z" fill="#e8c090"/><path d="M9.6 388.6 L11.4 387.2 L12.6 388.4 L10.6 390 Z" fill="#f08070"/><path d="M26.3 387.2 L26.3 391 M26 391 L23.4 405.2 M26.6 391 L29.2 405.2" fill="none" stroke="#2a2a2a" stroke-width="1"/><circle cx="26.3" cy="390.6" r="1.2" fill="#2a2a2a"/><rect x="41.4" y="396.2" width="23.6" height="7.4" rx="1.2" fill="#fdfdfd" stroke="#8a8a8a" stroke-width="0.9"/><rect x="43.2" y="396.6" width="0.8" height="2.2" fill="#555"/><rect x="45.2" y="396.6" width="0.8" height="1.4" fill="#555"/><rect x="47.2" y="396.6" width="0.8" height="2.2" fill="#555"/><rect x="49.2" y="396.6" width="0.8" height="1.4" fill="#555"/><rect x="51.2" y="396.6" width="0.8" height="2.2" fill="#555"/><rect x="53.2" y="396.6" width="0.8" height="3.2" fill="#555"/><rect x="55.2" y="396.6" width="0.8" height="2.2" fill="#555"/><rect x="57.2" y="396.6" width="0.8" height="1.4" fill="#555"/><rect x="59.2" y="396.6" width="0.8" height="2.2" fill="#555"/><rect x="61.2" y="396.6" width="0.8" height="1.4" fill="#555"/><rect x="63.2" y="396.6" width="0.8" height="2.2" fill="#555"/><rect x="7.8" y="425.6" width="17.2" height="12.4" fill="#fdf3c9" stroke="#333" stroke-width="1"/><circle cx="22" cy="436.8" r="7" fill="#fdf3c9" stroke="#333" stroke-width="1"/><path d="M15 438 H25 V429.8" fill="none" stroke="#333" stroke-width="1"/><circle cx="8" cy="438" r="1.6" fill="#f22"/><path d="M41.6 433.8 L58.8 424" stroke="#f22" stroke-width="1.2"/><path transform="translate(51.6,429.6) scale(0.62)" d="M0 0 L0 17.3 L4.2 13.6 L7.3 20.8 L10.2 19.6 L7.2 12.4 L12.2 11.9 Z" fill="#e8e8e8" stroke="#777" stroke-width="1.3" stroke-linejoin="round"/><path d="M19.6 467.4 L7.8 474.5 L7.8 484.4 L16.3 488.7 L28.4 481.6 L28.4 473 Z M7.8 474.5 L16.3 479.4 L28.4 473 M16.3 479.4 L16.3 488.7" fill="none" stroke="#2a2a2a" stroke-width="1.1" stroke-linejoin="round"/></svg>
<span class="t" style="left:7.20px;top:302.78px;font-size:29.5px;line-height:38px;color:#111;font-family:'Liberation Serif',serif;letter-spacing:-0.105px;">A</span>
<svg style="left:0;top:0" width="1500" height="844" shape-rendering="crispEdges"><rect x="96" y="148" width="1" height="7" fill="#555"/><rect x="106" y="152" width="1" height="3" fill="#555"/><rect x="116" y="148" width="1" height="7" fill="#555"/><rect x="126" y="152" width="1" height="3" fill="#555"/><rect x="136" y="148" width="1" height="7" fill="#555"/><rect x="146" y="152" width="1" height="3" fill="#555"/><rect x="156" y="148" width="1" height="7" fill="#555"/><rect x="166" y="152" width="1" height="3" fill="#555"/><rect x="176" y="148" width="1" height="7" fill="#555"/><rect x="186" y="152" width="1" height="3" fill="#555"/><rect x="196" y="148" width="1" height="7" fill="#555"/><rect x="206" y="152" width="1" height="3" fill="#555"/><rect x="216" y="148" width="1" height="7" fill="#555"/><rect x="226" y="152" width="1" height="3" fill="#555"/><rect x="236" y="148" width="1" height="7" fill="#555"/><rect x="246" y="152" width="1" height="3" fill="#555"/><rect x="256" y="148" width="1" height="7" fill="#555"/><rect x="266" y="152" width="1" height="3" fill="#555"/><rect x="276" y="148" width="1" height="7" fill="#555"/><rect x="286" y="152" width="1" height="3" fill="#555"/><rect x="296" y="148" width="1" height="7" fill="#555"/><rect x="306" y="152" width="1" height="3" fill="#555"/><rect x="316" y="148" width="1" height="7" fill="#555"/><rect x="326" y="152" width="1" height="3" fill="#555"/><rect x="336" y="148" width="1" height="7" fill="#555"/><rect x="346" y="152" width="1" height="3" fill="#555"/><rect x="356" y="148" width="1" height="7" fill="#555"/><rect x="366" y="152" width="1" height="3" fill="#555"/><rect x="376" y="148" width="1" height="7" fill="#555"/><rect x="386" y="152" width="1" height="3" fill="#555"/><rect x="396" y="148" width="1" height="7" fill="#555"/><rect x="406" y="152" width="1" height="3" fill="#555"/><rect x="416" y="148" width="1" height="7" fill="#555"/><rect x="426" y="152" width="1" height="3" fill="#555"/><rect x="436" y="148" width="1" height="7" fill="#555"/><rect x="446" y="152" width="1" height="3" fill="#555"/><rect x="456" y="148" width="1" height="7" fill="#555"/><rect x="466" y="152" width="1" height="3" fill="#555"/><rect x="476" y="148" width="1" height="7" fill="#555"/><rect x="486" y="152" width="1" height="3" fill="#555"/><rect x="496" y="148" width="1" height="7" fill="#555"/><rect x="506" y="152" width="1" height="3" fill="#555"/><rect x="516" y="148" width="1" height="7" fill="#555"/><rect x="526" y="152" width="1" height="3" fill="#555"/><rect x="536" y="148" width="1" height="7" fill="#555"/><rect x="546" y="152" width="1" height="3" fill="#555"/><rect x="556" y="148" width="1" height="7" fill="#555"/><rect x="566" y="152" width="1" height="3" fill="#555"/><rect x="576" y="148" width="1" height="7" fill="#555"/><rect x="586" y="152" width="1" height="3" fill="#555"/><rect x="596" y="148" width="1" height="7" fill="#555"/><rect x="606" y="152" width="1" height="3" fill="#555"/><rect x="616" y="148" width="1" height="7" fill="#555"/><rect x="626" y="152" width="1" height="3" fill="#555"/><rect x="636" y="148" width="1" height="7" fill="#555"/><rect x="646" y="152" width="1" height="3" fill="#555"/><rect x="656" y="148" width="1" height="7" fill="#555"/><rect x="666" y="152" width="1" height="3" fill="#555"/><rect x="676" y="148" width="1" height="7" fill="#555"/><rect x="686" y="152" width="1" height="3" fill="#555"/><rect x="696" y="148" width="1" height="7" fill="#555"/><rect x="706" y="152" width="1" height="3" fill="#555"/><rect x="716" y="148" width="1" height="7" fill="#555"/><rect x="726" y="152" width="1" height="3" fill="#555"/><rect x="736" y="148" width="1" height="7" fill="#555"/><rect x="746" y="152" width="1" height="3" fill="#555"/><rect x="756" y="148" width="1" height="7" fill="#555"/><rect x="766" y="152" width="1" height="3" fill="#555"/><rect x="776" y="148" width="1" height="7" fill="#555"/><rect x="786" y="152" width="1" height="3" fill="#555"/><rect x="796" y="148" width="1" height="7" fill="#555"/><rect x="806" y="152" width="1" height="3" fill="#555"/><rect x="816" y="148" width="1" height="7" fill="#555"/><rect x="826" y="152" width="1" height="3" fill="#555"/><rect x="836" y="148" width="1" height="7" fill="#555"/><rect x="846" y="152" width="1" height="3" fill="#555"/><rect x="856" y="148" width="1" height="7" fill="#555"/><rect x="866" y="152" width="1" height="3" fill="#555"/><rect x="876" y="148" width="1" height="7" fill="#555"/><rect x="886" y="152" width="1" height="3" fill="#555"/><rect x="896" y="148" width="1" height="7" fill="#555"/><rect x="906" y="152" width="1" height="3" fill="#555"/><rect x="916" y="148" width="1" height="7" fill="#555"/><rect x="926" y="152" width="1" height="3" fill="#555"/><rect x="936" y="148" width="1" height="7" fill="#555"/><rect x="946" y="152" width="1" height="3" fill="#555"/><rect x="956" y="148" width="1" height="7" fill="#555"/><rect x="966" y="152" width="1" height="3" fill="#555"/><rect x="976" y="148" width="1" height="7" fill="#555"/><rect x="986" y="152" width="1" height="3" fill="#555"/><rect x="996" y="148" width="1" height="7" fill="#555"/><rect x="1006" y="152" width="1" height="3" fill="#555"/><rect x="1016" y="148" width="1" height="7" fill="#555"/><rect x="1026" y="152" width="1" height="3" fill="#555"/><rect x="1036" y="148" width="1" height="7" fill="#555"/><rect x="1046" y="152" width="1" height="3" fill="#555"/><rect x="1056" y="148" width="1" height="7" fill="#555"/><rect x="1066" y="152" width="1" height="3" fill="#555"/><rect x="1076" y="148" width="1" height="7" fill="#555"/><rect x="1086" y="152" width="1" height="3" fill="#555"/><rect x="1096" y="148" width="1" height="7" fill="#555"/><rect x="1106" y="152" width="1" height="3" fill="#555"/><rect x="1116" y="148" width="1" height="7" fill="#555"/><rect x="1126" y="152" width="1" height="3" fill="#555"/><rect x="1136" y="148" width="1" height="7" fill="#555"/>
<rect x="88" y="723" width="7" height="1" fill="#555"/><rect x="91" y="713" width="4" height="1" fill="#555"/><rect x="88" y="703" width="7" height="1" fill="#555"/><rect x="91" y="693" width="4" height="1" fill="#555"/><rect x="88" y="683" width="7" height="1" fill="#555"/><rect x="91" y="673" width="4" height="1" fill="#555"/><rect x="88" y="663" width="7" height="1" fill="#555"/><rect x="91" y="653" width="4" height="1" fill="#555"/><rect x="88" y="643" width="7" height="1" fill="#555"/><rect x="91" y="633" width="4" height="1" fill="#555"/><rect x="88" y="623" width="7" height="1" fill="#555"/><rect x="91" y="613" width="4" height="1" fill="#555"/><rect x="88" y="603" width="7" height="1" fill="#555"/><rect x="91" y="593" width="4" height="1" fill="#555"/><rect x="88" y="583" width="7" height="1" fill="#555"/><rect x="91" y="573" width="4" height="1" fill="#555"/><rect x="88" y="563" width="7" height="1" fill="#555"/><rect x="91" y="553" width="4" height="1" fill="#555"/><rect x="88" y="543" width="7" height="1" fill="#555"/><rect x="91" y="533" width="4" height="1" fill="#555"/><rect x="88" y="523" width="7" height="1" fill="#555"/><rect x="91" y="513" width="4" height="1" fill="#555"/><rect x="88" y="503" width="7" height="1" fill="#555"/><rect x="91" y="493" width="4" height="1" fill="#555"/><rect x="88" y="483" width="7" height="1" fill="#555"/><rect x="91" y="473" width="4" height="1" fill="#555"/><rect x="88" y="463" width="7" height="1" fill="#555"/><rect x="91" y="453" width="4" height="1" fill="#555"/><rect x="88" y="443" width="7" height="1" fill="#555"/><rect x="91" y="433" width="4" height="1" fill="#555"/><rect x="88" y="423" width="7" height="1" fill="#555"/><rect x="91" y="413" width="4" height="1" fill="#555"/><rect x="88" y="403" width="7" height="1" fill="#555"/><rect x="91" y="393" width="4" height="1" fill="#555"/><rect x="88" y="383" width="7" height="1" fill="#555"/><rect x="91" y="373" width="4" height="1" fill="#555"/><rect x="88" y="363" width="7" height="1" fill="#555"/><rect x="91" y="353" width="4" height="1" fill="#555"/><rect x="88" y="343" width="7" height="1" fill="#555"/><rect x="91" y="333" width="4" height="1" fill="#555"/><rect x="88" y="323" width="7" height="1" fill="#555"/><rect x="91" y="313" width="4" height="1" fill="#555"/><rect x="88" y="303" width="7" height="1" fill="#555"/><rect x="91" y="293" width="4" height="1" fill="#555"/><rect x="88" y="283" width="7" height="1" fill="#555"/><rect x="91" y="273" width="4" height="1" fill="#555"/><rect x="88" y="263" width="7" height="1" fill="#555"/><rect x="91" y="253" width="4" height="1" fill="#555"/><rect x="88" y="243" width="7" height="1" fill="#555"/><rect x="91" y="233" width="4" height="1" fill="#555"/><rect x="88" y="223" width="7" height="1" fill="#555"/><rect x="91" y="213" width="4" height="1" fill="#555"/><rect x="88" y="203" width="7" height="1" fill="#555"/><rect x="91" y="193" width="4" height="1" fill="#555"/><rect x="88" y="183" width="7" height="1" fill="#555"/><rect x="91" y="173" width="4" height="1" fill="#555"/><rect x="88" y="163" width="7" height="1" fill="#555"/></svg>
<div class="a" style="left:72px;top:132px;width:1066.5px;height:23px;overflow:hidden;">
<span class="t" style="left:21.91px;top:-0.02px;font-size:9.3px;line-height:12px;color:#1a1a1a;font-family:'Liberation Sans',sans-serif;letter-spacing:0.000px;">2</span>
<span class="t" style="left:41.91px;top:-0.02px;font-size:9.3px;line-height:12px;color:#1a1a1a;font-family:'Liberation Sans',sans-serif;letter-spacing:0.000px;">0</span>
<span class="t" style="left:61.91px;top:-0.02px;font-size:9.3px;line-height:12px;color:#1a1a1a;font-family:'Liberation Sans',sans-serif;letter-spacing:0.000px;">2</span>
<span class="t" style="left:81.91px;top:-0.02px;font-size:9.3px;line-height:12px;color:#1a1a1a;font-family:'Liberation Sans',sans-serif;letter-spacing:0.000px;">4</span>
<span class="t" style="left:101.91px;top:-0.02px;font-size:9.3px;line-height:12px;color:#1a1a1a;font-family:'Liberation Sans',sans-serif;letter-spacing:0.000px;">6</span>
<span class="t" style="left:121.91px;top:-0.02px;font-size:9.3px;line-height:12px;color:#1a1a1a;font-family:'Liberation Sans',sans-serif;letter-spacing:0.000px;">8</span>
<span class="t" style="left:139.33px;top:-0.02px;font-size:9.3px;line-height:12px;color:#1a1a1a;font-family:'Liberation Sans',sans-serif;letter-spacing:0.000px;">10</span>
<span class="t" style="left:159.33px;top:-0.02px;font-size:9.3px;line-height:12px;color:#1a1a1a;font-family:'Liberation Sans',sans-serif;letter-spacing:0.000px;">12</span>
<span class="t" style="left:179.33px;top:-0.02px;font-size:9.3px;line-height:12px;color:#1a1a1a;font-family:'Liberation Sans',sans-serif;letter-spacing:0.000px;">14</span>
<span class="t" style="left:199.33px;top:-0.02px;font-size:9.3px;line-height:12px;color:#1a1a1a;font-family:'Liberation Sans',sans-serif;letter-spacing:0.000px;">16</span>
<span class="t" style="left:219.33px;top:-0.02px;font-size:9.3px;line-height:12px;color:#1a1a1a;font-family:'Liberation Sans',sans-serif;letter-spacing:0.000px;">18</span>
<span class="t" style="left:239.33px;top:-0.02px;font-size:9.3px;line-height:12px;color:#1a1a1a;font-family:'Liberation Sans',sans-serif;letter-spacing:0.000px;">20</span>
<span class="t" style="left:259.33px;top:-0.02px;font-size:9.3px;line-height:12px;color:#1a1a1a;font-family:'Liberation Sans',sans-serif;letter-spacing:0.000px;">22</span>
<span class="t" style="left:279.33px;top:-0.02px;font-size:9.3px;line-height:12px;color:#1a1a1a;font-family:'Liberation Sans',sans-serif;letter-spacing:0.000px;">24</span>
<span class="t" style="left:299.33px;top:-0.02px;font-size:9.3px;line-height:12px;color:#1a1a1a;font-family:'Liberation Sans',sans-serif;letter-spacing:0.000px;">26</span>
<span class="t" style="left:319.33px;top:-0.02px;font-size:9.3px;line-height:12px;color:#1a1a1a;font-family:'Liberation Sans',sans-serif;letter-spacing:0.000px;">28</span>
<span class="t" style="left:339.33px;top:-0.02px;font-size:9.3px;line-height:12px;color:#1a1a1a;font-family:'Liberation Sans',sans-serif;letter-spacing:0.000px;">30</span>
<span class="t" style="left:359.33px;top:-0.02px;font-size:9.3px;line-height:12px;color:#1a1a1a;font-family:'Liberation Sans',sans-serif;letter-spacing:0.000px;">32</span>
<span class="t" style="left:379.33px;top:-0.02px;font-size:9.3px;line-height:12px;color:#1a1a1a;font-family:'Liberation Sans',sans-serif;letter-spacing:0.000px;">34</span>
<span class="t" style="left:399.33px;top:-0.02px;font-size:9.3px;line-height:12px;color:#1a1a1a;font-family:'Liberation Sans',sans-serif;letter-spacing:0.000px;">36</span>
<span class="t" style="left:419.33px;top:-0.02px;font-size:9.3px;line-height:12px;color:#1a1a1a;font-family:'Liberation Sans',sans-serif;letter-spacing:0.000px;">38</span>
<span class="t" style="left:439.33px;top:-0.02px;font-size:9.3px;line-height:12px;color:#1a1a1a;font-family:'Liberation Sans',sans-serif;letter-spacing:0.000px;">40</span>
<span class="t" style="left:459.33px;top:-0.02px;font-size:9.3px;line-height:12px;color:#1a1a1a;font-family:'Liberation Sans',sans-serif;letter-spacing:0.000px;">42</span>
<span class="t" style="left:479.33px;top:-0.02px;font-size:9.3px;line-height:12px;color:#1a1a1a;font-family:'Liberation Sans',sans-serif;letter-spacing:0.000px;">44</span>
<span class="t" style="left:499.33px;top:-0.02px;font-size:9.3px;line-height:12px;color:#1a1a1a;font-family:'Liberation Sans',sans-serif;letter-spacing:0.000px;">46</span>
<span class="t" style="left:519.33px;top:-0.02px;font-size:9.3px;line-height:12px;color:#1a1a1a;font-family:'Liberation Sans',sans-serif;letter-spacing:0.000px;">48</span>
<span class="t" style="left:539.33px;top:-0.02px;font-size:9.3px;line-height:12px;color:#1a1a1a;font-family:'Liberation Sans',sans-serif;letter-spacing:0.000px;">50</span>
<span class="t" style="left:559.33px;top:-0.02px;font-size:9.3px;line-height:12px;color:#1a1a1a;font-family:'Liberation Sans',sans-serif;letter-spacing:0.000px;">52</span>
<span class="t" style="left:579.33px;top:-0.02px;font-size:9.3px;line-height:12px;color:#1a1a1a;font-family:'Liberation Sans',sans-serif;letter-spacing:0.000px;">54</span>
<span class="t" style="left:599.33px;top:-0.02px;font-size:9.3px;line-height:12px;color:#1a1a1a;font-family:'Liberation Sans',sans-serif;letter-spacing:0.000px;">56</span>
<span class="t" style="left:619.33px;top:-0.02px;font-size:9.3px;line-height:12px;color:#1a1a1a;font-family:'Liberation Sans',sans-serif;letter-spacing:0.000px;">58</span>
<span class="t" style="left:639.33px;top:-0.02px;font-size:9.3px;line-height:12px;color:#1a1a1a;font-family:'Liberation Sans',sans-serif;letter-spacing:0.000px;">60</span>
<span class="t" style="left:659.33px;top:-0.02px;font-size:9.3px;line-height:12px;color:#1a1a1a;font-family:'Liberation Sans',sans-serif;letter-spacing:0.000px;">62</span>
<span class="t" style="left:679.33px;top:-0.02px;font-size:9.3px;line-height:12px;color:#1a1a1a;font-family:'Liberation Sans',sans-serif;letter-spacing:0.000px;">64</span>
<span class="t" style="left:699.33px;top:-0.02px;font-size:9.3px;line-height:12px;color:#1a1a1a;font-family:'Liberation Sans',sans-serif;letter-spacing:0.000px;">66</span>
<span class="t" style="left:719.33px;top:-0.02px;font-size:9.3px;line-height:12px;color:#1a1a1a;font-family:'Liberation Sans',sans-serif;letter-spacing:0.000px;">68</span>
<span class="t" style="left:739.33px;top:-0.02px;font-size:9.3px;line-height:12px;color:#1a1a1a;font-family:'Liberation Sans',sans-serif;letter-spacing:0.000px;">70</span>
<span class="t" style="left:759.33px;top:-0.02px;font-size:9.3px;line-height:12px;color:#1a1a1a;font-family:'Liberation Sans',sans-serif;letter-spacing:0.000px;">72</span>
<span class="t" style="left:779.33px;top:-0.02px;font-size:9.3px;line-height:12px;color:#1a1a1a;font-family:'Liberation Sans',sans-serif;letter-spacing:0.000px;">74</span>
<span class="t" style="left:799.33px;top:-0.02px;font-size:9.3px;line-height:12px;color:#1a1a1a;font-family:'Liberation Sans',sans-serif;letter-spacing:0.000px;">76</span>
<span class="t" style="left:819.33px;top:-0.02px;font-size:9.3px;line-height:12px;color:#1a1a1a;font-family:'Liberation Sans',sans-serif;letter-spacing:0.000px;">78</span>
<span class="t" style="left:839.33px;top:-0.02px;font-size:9.3px;line-height:12px;color:#1a1a1a;font-family:'Liberation Sans',sans-serif;letter-spacing:0.000px;">80</span>
<span class="t" style="left:859.33px;top:-0.02px;font-size:9.3px;line-height:12px;color:#1a1a1a;font-family:'Liberation Sans',sans-serif;letter-spacing:0.000px;">82</span>
<span class="t" style="left:879.33px;top:-0.02px;font-size:9.3px;line-height:12px;color:#1a1a1a;font-family:'Liberation Sans',sans-serif;letter-spacing:0.000px;">84</span>
<span class="t" style="left:899.33px;top:-0.02px;font-size:9.3px;line-height:12px;color:#1a1a1a;font-family:'Liberation Sans',sans-serif;letter-spacing:0.000px;">86</span>
<span class="t" style="left:919.33px;top:-0.02px;font-size:9.3px;line-height:12px;color:#1a1a1a;font-family:'Liberation Sans',sans-serif;letter-spacing:0.000px;">88</span>
<span class="t" style="left:939.33px;top:-0.02px;font-size:9.3px;line-height:12px;color:#1a1a1a;font-family:'Liberation Sans',sans-serif;letter-spacing:0.000px;">90</span>
<span class="t" style="left:959.33px;top:-0.02px;font-size:9.3px;line-height:12px;color:#1a1a1a;font-family:'Liberation Sans',sans-serif;letter-spacing:0.000px;">92</span>
<span class="t" style="left:979.33px;top:-0.02px;font-size:9.3px;line-height:12px;color:#1a1a1a;font-family:'Liberation Sans',sans-serif;letter-spacing:0.000px;">94</span>
<span class="t" style="left:999.33px;top:-0.02px;font-size:9.3px;line-height:12px;color:#1a1a1a;font-family:'Liberation Sans',sans-serif;letter-spacing:0.000px;">96</span>
<span class="t" style="left:1019.33px;top:-0.02px;font-size:9.3px;line-height:12px;color:#1a1a1a;font-family:'Liberation Sans',sans-serif;letter-spacing:0.000px;">98</span>
<span class="t" style="left:1036.74px;top:-0.02px;font-size:9.3px;line-height:12px;color:#1a1a1a;font-family:'Liberation Sans',sans-serif;letter-spacing:0.000px;">100</span>
<span class="t" style="left:1056.74px;top:-0.02px;font-size:9.3px;line-height:12px;color:#1a1a1a;font-family:'Liberation Sans',sans-serif;letter-spacing:0.000px;">102</span>
</div>
<div class="a" style="left:72px;top:155px;width:23px;height:576px;overflow:hidden;">
<span class="t" style="left:6.40px;top:575.22px;font-size:9.3px;line-height:0;color:#1a1a1a;transform-origin:0 0;transform:rotate(-90deg);">-18</span>
<span class="t" style="left:6.40px;top:555.22px;font-size:9.3px;line-height:0;color:#1a1a1a;transform-origin:0 0;transform:rotate(-90deg);">-16</span>
<span class="t" style="left:6.40px;top:535.22px;font-size:9.3px;line-height:0;color:#1a1a1a;transform-origin:0 0;transform:rotate(-90deg);">-14</span>
<span class="t" style="left:6.40px;top:515.22px;font-size:9.3px;line-height:0;color:#1a1a1a;transform-origin:0 0;transform:rotate(-90deg);">-12</span>
<span class="t" style="left:6.40px;top:495.22px;font-size:9.3px;line-height:0;color:#1a1a1a;transform-origin:0 0;transform:rotate(-90deg);">-10</span>
<span class="t" style="left:6.40px;top:472.63px;font-size:9.3px;line-height:0;color:#1a1a1a;transform-origin:0 0;transform:rotate(-90deg);">-8</span>
<span class="t" style="left:6.40px;top:452.63px;font-size:9.3px;line-height:0;color:#1a1a1a;transform-origin:0 0;transform:rotate(-90deg);">-6</span>
<span class="t" style="left:6.40px;top:432.63px;font-size:9.3px;line-height:0;color:#1a1a1a;transform-origin:0 0;transform:rotate(-90deg);">-4</span>
<span class="t" style="left:6.40px;top:412.63px;font-size:9.3px;line-height:0;color:#1a1a1a;transform-origin:0 0;transform:rotate(-90deg);">-2</span>
<span class="t" style="left:6.40px;top:391.09px;font-size:9.3px;line-height:0;color:#1a1a1a;transform-origin:0 0;transform:rotate(-90deg);">0</span>
<span class="t" style="left:6.40px;top:371.09px;font-size:9.3px;line-height:0;color:#1a1a1a;transform-origin:0 0;transform:rotate(-90deg);">2</span>
<span class="t" style="left:6.40px;top:351.09px;font-size:9.3px;line-height:0;color:#1a1a1a;transform-origin:0 0;transform:rotate(-90deg);">4</span>
<span class="t" style="left:6.40px;top:331.09px;font-size:9.3px;line-height:0;color:#1a1a1a;transform-origin:0 0;transform:rotate(-90deg);">6</span>
<span class="t" style="left:6.40px;top:311.09px;font-size:9.3px;line-height:0;color:#1a1a1a;transform-origin:0 0;transform:rotate(-90deg);">8</span>
<span class="t" style="left:6.40px;top:293.67px;font-size:9.3px;line-height:0;color:#1a1a1a;transform-origin:0 0;transform:rotate(-90deg);">10</span>
<span class="t" style="left:6.40px;top:273.67px;font-size:9.3px;line-height:0;color:#1a1a1a;transform-origin:0 0;transform:rotate(-90deg);">12</span>
<span class="t" style="left:6.40px;top:253.67px;font-size:9.3px;line-height:0;color:#1a1a1a;transform-origin:0 0;transform:rotate(-90deg);">14</span>
<span class="t" style="left:6.40px;top:233.67px;font-size:9.3px;line-height:0;color:#1a1a1a;transform-origin:0 0;transform:rotate(-90deg);">16</span>
<span class="t" style="left:6.40px;top:213.67px;font-size:9.3px;line-height:0;color:#1a1a1a;transform-origin:0 0;transform:rotate(-90deg);">18</span>
<span class="t" style="left:6.40px;top:193.67px;font-size:9.3px;line-height:0;color:#1a1a1a;transform-origin:0 0;transform:rotate(-90deg);">20</span>
<span class="t" style="left:6.40px;top:173.67px;font-size:9.3px;line-height:0;color:#1a1a1a;transform-origin:0 0;transform:rotate(-90deg);">22</span>
<span class="t" style="left:6.40px;top:153.67px;font-size:9.3px;line-height:0;color:#1a1a1a;transform-origin:0 0;transform:rotate(-90deg);">24</span>
<span class="t" style="left:6.40px;top:133.67px;font-size:9.3px;line-height:0;color:#1a1a1a;transform-origin:0 0;transform:rotate(-90deg);">26</span>
<span class="t" style="left:6.40px;top:113.67px;font-size:9.3px;line-height:0;color:#1a1a1a;transform-origin:0 0;transform:rotate(-90deg);">28</span>
<span class="t" style="left:6.40px;top:93.67px;font-size:9.3px;line-height:0;color:#1a1a1a;transform-origin:0 0;transform:rotate(-90deg);">30</span>
<span class="t" style="left:6.40px;top:73.67px;font-size:9.3px;line-height:0;color:#1a1a1a;transform-origin:0 0;transform:rotate(-90deg);">32</span>
<span class="t" style="left:6.40px;top:53.67px;font-size:9.3px;line-height:0;color:#1a1a1a;transform-origin:0 0;transform:rotate(-90deg);">34</span>
<span class="t" style="left:6.40px;top:33.67px;font-size:9.3px;line-height:0;color:#1a1a1a;transform-origin:0 0;transform:rotate(-90deg);">36</span>
<span class="t" style="left:6.40px;top:13.67px;font-size:9.3px;line-height:0;color:#1a1a1a;transform-origin:0 0;transform:rotate(-90deg);">38</span>
</div>
<svg style="left:0;top:0" width="1500" height="844"><path d="M211.2 145.5 L221.8 145.5 L216.5 152.8 Z" fill="#000"/><path d="M84.6 358.2 L84.6 368.8 L92.3 363.5 Z" fill="#000"/></svg>
<svg style="left:95px;top:155px;overflow:hidden" width="1043" height="577"><defs><pattern id="gd" x="1" y="8" width="10" height="10" patternUnits="userSpaceOnUse"><rect x="0" y="0" width="1" height="1" fill="#fff" fill-opacity="0.205"/></pattern></defs><g shape-rendering="crispEdges"><rect x="21" y="0" width="1" height="576" fill="#1f1f1f"/><rect x="121" y="0" width="1" height="576" fill="#1f1f1f"/><rect x="221" y="0" width="1" height="576" fill="#1f1f1f"/><rect x="321" y="0" width="1" height="576" fill="#1f1f1f"/><rect x="421" y="0" width="1" height="576" fill="#1f1f1f"/><rect x="521" y="0" width="1" height="576" fill="#1f1f1f"/><rect x="621" y="0" width="1" height="576" fill="#1f1f1f"/><rect x="721" y="0" width="1" height="576" fill="#1f1f1f"/><rect x="821" y="0" width="1" height="576" fill="#1f1f1f"/><rect x="921" y="0" width="1" height="576" fill="#1f1f1f"/><rect x="1021" y="0" width="1" height="576" fill="#1f1f1f"/><rect x="0" y="488" width="1043" height="1" fill="#1f1f1f"/><rect x="0" y="388" width="1043" height="1" fill="#1f1f1f"/><rect x="0" y="288" width="1043" height="1" fill="#1f1f1f"/><rect x="0" y="188" width="1043" height="1" fill="#1f1f1f"/><rect x="0" y="88" width="1043" height="1" fill="#1f1f1f"/><rect x="0" y="0" width="1043" height="577" fill="url(#gd)"/><rect x="0" y="388" width="41" height="1" fill="#8a0000"/><rect x="21" y="368" width="1" height="41" fill="#8a0000"/></g><text transform="translate(331.3,378.29999999999995) rotate(-90)" font-family="Liberation Sans, sans-serif" font-size="28.4" fill="#fff" stroke="#000" stroke-width="0.15" letter-spacing="-0.42">104.245.02.4B</text><line x1="221.5" y1="168" x2="221.5" y2="409" stroke="#f00" stroke-width="1" stroke-dasharray="18 6.9 1.2 7.00" stroke-dashoffset="4.30" shape-rendering="crispEdges"/><line x1="821.5" y1="168" x2="821.5" y2="409" stroke="#f00" stroke-width="1" stroke-dasharray="18 6.9 1.2 7.00" stroke-dashoffset="4.30" shape-rendering="crispEdges"/><line x1="101" y1="288.5" x2="942" y2="288.5" stroke="#f00" stroke-width="1" stroke-dasharray="18 6.9 1.2 7.00" stroke-dashoffset="2.20" shape-rendering="crispEdges"/><circle cx="221.5" cy="288.5" r="40" fill="none" stroke="#fff" stroke-width="3"/><circle cx="821.5" cy="288.5" r="40" fill="none" stroke="#fff" stroke-width="3"/><rect x="121.5" y="208.5" width="800" height="180" fill="none" stroke="#7a3c3c" stroke-width="3" shape-rendering="crispEdges"/><rect x="116.5" y="203.5" width="10" height="10" fill="#000060" stroke="#b9b9cf" stroke-width="1" shape-rendering="crispEdges"/><rect x="916.5" y="203.5" width="10" height="10" fill="#0000a0" stroke="#b9b9cf" stroke-width="1" shape-rendering="crispEdges"/><rect x="116.5" y="383.5" width="10" height="10" fill="#0000a0" stroke="#b9b9cf" stroke-width="1" shape-rendering="crispEdges"/><rect x="916.5" y="383.5" width="10" height="10" fill="#c00028" stroke="#cf9fa8" stroke-width="1" shape-rendering="crispEdges"/><g stroke="#a80000" stroke-width="1" fill="none"><circle cx="121.5" cy="188.5" r="5.2"/><path d="M116.5 188.5 h10 M121.5 183.5 v10"/></g><defs><radialGradient id="ring" cx="50%" cy="50%" r="50%"><stop offset="0.70" stop-color="#52667a" stop-opacity="0"/><stop offset="0.79" stop-color="#52667a" stop-opacity="0.22"/><stop offset="0.84" stop-color="#566a7c" stop-opacity="0.6"/><stop offset="0.885" stop-color="#5b7081" stop-opacity="0.95"/><stop offset="0.93" stop-color="#5e7384" stop-opacity="1"/><stop offset="0.97" stop-color="#586c7d" stop-opacity="0.9"/><stop offset="1" stop-color="#566a7b" stop-opacity="0"/></radialGradient></defs><circle cx="122" cy="209.8" r="39.8" fill="url(#ring)"/><g transform="translate(121.5,208.2) scale(1.13,1.19)"><path d="M0.5 0.5 L0.5 20.5 L4.6 16.7 L8.2 24.9 L12.7 23 L9.1 15.1 L14.8 15 Z" fill="#fff" stroke="#fff" stroke-width="2.1" stroke-linejoin="round"/><path d="M0.5 0.5 L0.5 20.5 L4.6 16.7 L8.2 24.9 L12.7 23 L9.1 15.1 L14.8 15 Z" fill="#fff" stroke="#000" stroke-width="1.0" stroke-linejoin="round"/></g></svg>
<div class="a" style="left:1155px;top:108px;width:300px;height:23px;background:linear-gradient(#f2f2f2,#dcdcdc);"></div>
<div class="a" style="left:1154.5px;top:108px;width:1.5px;height:690px;background:#b9b9b9;"></div>
<div class="a" style="left:1156px;top:156px;width:298px;height:642px;background:#fff;"></div>
<div class="a" style="left:1156px;top:130px;width:298px;height:26px;background:#b0b0b0;"></div>
<div class="a" style="left:1156px;top:131.5px;width:58.5px;height:23px;background:linear-gradient(#ededed,#fafafa);"></div>
<div class="a" style="left:1216px;top:131.5px;width:58.5px;height:23px;background:linear-gradient(#ededed,#fafafa);"></div>
<div class="a" style="left:1276px;top:131.5px;width:58.5px;height:23px;background:linear-gradient(#ededed,#fafafa);"></div>
<div class="a" style="left:1336px;top:131.5px;width:58.5px;height:23px;background:linear-gradient(#ededed,#fafafa);"></div>
<div class="a" style="left:1396px;top:131.5px;width:56.5px;height:23px;background:linear-gradient(#ededed,#fafafa);"></div>
<span class="t" style="left:1276.50px;top:112.09px;font-size:11px;line-height:14px;color:#262626;font-family:'Liberation Sans',sans-serif;letter-spacing:0.400px;-webkit-text-stroke:0.25px #262626;">Liste des calques</span>
<svg style="left:0;top:0" width="1500" height="300"><circle cx="1164" cy="118" r="6.9" fill="#666"/><path d="M1161 115 L1167 121 M1167 115 L1161 121" stroke="#f2f2f2" stroke-width="2" stroke-linecap="round"/><circle cx="1182" cy="118" r="6.9" fill="#666"/><rect x="1180.6" y="114.4" width="5" height="4.4" rx="0.8" fill="none" stroke="#f2f2f2" stroke-width="1.1"/><rect x="1178.2" y="116.8" width="5" height="4.4" rx="0.8" fill="#666" stroke="#f2f2f2" stroke-width="1.1"/><g transform="translate(1185,143) scale(1.0)">
<path d="M-7.4 0.2 C-5.6 -4.6 -1.6 -6 1 -5.8 C4.4 -5.6 6.6 -3 7.5 -0.2 C7 0.6 6.4 1.2 6 1.6 C4.6 4 2.4 5.2 0.2 5.4 C-0.4 5.8 -1 5.6 -1.4 5.3 C-4 4.6 -6 2.8 -7.4 0.2 Z" fill="#000"/>
<path d="M-4.6 0.5 C-3.2 -2 -1 -2.8 0.5 -2.8 C2.6 -2.8 4 -1.6 4.7 0.5 C3.8 2.6 2.2 3.5 0.3 3.5 C-1.8 3.5 -3.4 2.5 -4.6 0.5 Z" fill="#fff"/>
<circle cx="0.2" cy="0" r="2.75" fill="#000"/>
<circle cx="-0.6" cy="-1" r="0.8" fill="#fff" opacity="0.7"/>
</g><g transform="translate(1245,143) scale(1.0)">
<path d="M-7.4 0.2 C-5.6 -4.6 -1.6 -6 1 -5.8 C4.4 -5.6 6.6 -3 7.5 -0.2 C7 0.6 6.4 1.2 6 1.6 C4.6 4 2.4 5.2 0.2 5.4 C-0.4 5.8 -1 5.6 -1.4 5.3 C-4 4.6 -6 2.8 -7.4 0.2 Z" fill="#a2a2a2"/>
<path d="M-4.6 0.5 C-3.2 -2 -1 -2.8 0.5 -2.8 C2.6 -2.8 4 -1.6 4.7 0.5 C3.8 2.6 2.2 3.5 0.3 3.5 C-1.8 3.5 -3.4 2.5 -4.6 0.5 Z" fill="#fff"/>
<circle cx="0.2" cy="0" r="2.75" fill="#a2a2a2"/>
<circle cx="-0.6" cy="-1" r="0.8" fill="#fff" opacity="0.7"/>
</g><path d="M1298.2 143.2 h12.6 M1304.5 136.9 v12.6" stroke="#e00000" stroke-width="2.8"/><path d="M1359 143 h11.8" stroke="#e00000" stroke-width="2.8"/><g transform="translate(1417.6,150.4)">
<path d="M0 0 L1.2 -3.6 L10.8 -13.2 L13.4 -10.6 L3.8 -1 Z" fill="#e8a13a" stroke="#8a5a1a" stroke-width="0.5"/>
<path d="M2.4 -2.4 L11.8 -11.8" stroke="#f6c268" stroke-width="1.2"/>
<path d="M10.2 -12.6 Q11.8 -14.6 13.4 -13.4 Q14.8 -12 13.2 -10.2 Z" fill="#e0402a"/>
<path d="M0 0 L1.2 -3.6 L3.8 -1 Z" fill="#f0d8a8"/><path d="M0 0 L0.6 -1.6 L1.7 -0.5 Z" fill="#222"/>
</g><g transform="translate(1394.6,233.4)">
<path d="M0 0 L1.2 -3.6 L10.8 -13.2 L13.4 -10.6 L3.8 -1 Z" fill="#e8a13a" stroke="#8a5a1a" stroke-width="0.5"/>
<path d="M2.4 -2.4 L11.8 -11.8" stroke="#f6c268" stroke-width="1.2"/>
<path d="M10.2 -12.6 Q11.8 -14.6 13.4 -13.4 Q14.8 -12 13.2 -10.2 Z" fill="#e0402a"/>
<path d="M0 0 L1.2 -3.6 L3.8 -1 Z" fill="#f0d8a8"/><path d="M0 0 L0.6 -1.6 L1.7 -0.5 Z" fill="#222"/>
</g><rect x="1161.6" y="163.6" width="15.2" height="7.8" fill="#fff" stroke="#000" stroke-width="1.2"/><g transform="translate(1423,167.5) scale(1.0)">
<path d="M-7.4 0.2 C-5.6 -4.6 -1.6 -6 1 -5.8 C4.4 -5.6 6.6 -3 7.5 -0.2 C7 0.6 6.4 1.2 6 1.6 C4.6 4 2.4 5.2 0.2 5.4 C-0.4 5.8 -1 5.6 -1.4 5.3 C-4 4.6 -6 2.8 -7.4 0.2 Z" fill="#000"/>
<path d="M-4.6 0.5 C-3.2 -2 -1 -2.8 0.5 -2.8 C2.6 -2.8 4 -1.6 4.7 0.5 C3.8 2.6 2.2 3.5 0.3 3.5 C-1.8 3.5 -3.4 2.5 -4.6 0.5 Z" fill="#fff"/>
<circle cx="0.2" cy="0" r="2.75" fill="#000"/>
<circle cx="-0.6" cy="-1" r="0.8" fill="#fff" opacity="0.7"/>
</g><g transform="translate(1440,160.3)"><path d="M2 6 V3.8 A3 3 0 0 1 8 3.8 V6" fill="none" stroke="#b4b4b4" stroke-width="1.5"/><rect x="0" y="5.6" width="10" height="7.4" fill="#b4b4b4"/></g><rect x="1161.6" y="183.6" width="15.2" height="7.8" fill="#f00" stroke="#000" stroke-width="1.2"/><g transform="translate(1423,187.5) scale(1.0)">
<path d="M-7.4 0.2 C-5.6 -4.6 -1.6 -6 1 -5.8 C4.4 -5.6 6.6 -3 7.5 -0.2 C7 0.6 6.4 1.2 6 1.6 C4.6 4 2.4 5.2 0.2 5.4 C-0.4 5.8 -1 5.6 -1.4 5.3 C-4 4.6 -6 2.8 -7.4 0.2 Z" fill="#000"/>
<path d="M-4.6 0.5 C-3.2 -2 -1 -2.8 0.5 -2.8 C2.6 -2.8 4 -1.6 4.7 0.5 C3.8 2.6 2.2 3.5 0.3 3.5 C-1.8 3.5 -3.4 2.5 -4.6 0.5 Z" fill="#fff"/>
<circle cx="0.2" cy="0" r="2.75" fill="#000"/>
<circle cx="-0.6" cy="-1" r="0.8" fill="#fff" opacity="0.7"/>
</g><g transform="translate(1440,180.3)"><path d="M2 6 V3.8 A3 3 0 0 1 8 3.8 V6" fill="none" stroke="#b4b4b4" stroke-width="1.5"/><rect x="0" y="5.6" width="10" height="7.4" fill="#b4b4b4"/></g><rect x="1161.6" y="203.6" width="15.2" height="7.8" fill="#000" stroke="#000" stroke-width="1.2"/><g transform="translate(1423,207.5) scale(1.0)">
<path d="M-7.4 0.2 C-5.6 -4.6 -1.6 -6 1 -5.8 C4.4 -5.6 6.6 -3 7.5 -0.2 C7 0.6 6.4 1.2 6 1.6 C4.6 4 2.4 5.2 0.2 5.4 C-0.4 5.8 -1 5.6 -1.4 5.3 C-4 4.6 -6 2.8 -7.4 0.2 Z" fill="#000"/>
<path d="M-4.6 0.5 C-3.2 -2 -1 -2.8 0.5 -2.8 C2.6 -2.8 4 -1.6 4.7 0.5 C3.8 2.6 2.2 3.5 0.3 3.5 C-1.8 3.5 -3.4 2.5 -4.6 0.5 Z" fill="#fff"/>
<circle cx="0.2" cy="0" r="2.75" fill="#000"/>
<circle cx="-0.6" cy="-1" r="0.8" fill="#fff" opacity="0.7"/>
</g><g transform="translate(1440,200.3)"><path d="M2 6 V3.8 A3 3 0 0 1 8 3.8 V6" fill="none" stroke="#b4b4b4" stroke-width="1.5"/><rect x="0" y="5.6" width="10" height="7.4" fill="#b4b4b4"/></g><rect x="1161.6" y="223.6" width="15.2" height="7.8" fill="#fff" stroke="#000" stroke-width="1.2"/><g transform="translate(1423,227.5) scale(1.0)">
<path d="M-7.4 0.2 C-5.6 -4.6 -1.6 -6 1 -5.8 C4.4 -5.6 6.6 -3 7.5 -0.2 C7 0.6 6.4 1.2 6 1.6 C4.6 4 2.4 5.2 0.2 5.4 C-0.4 5.8 -1 5.6 -1.4 5.3 C-4 4.6 -6 2.8 -7.4 0.2 Z" fill="#000"/>
<path d="M-4.6 0.5 C-3.2 -2 -1 -2.8 0.5 -2.8 C2.6 -2.8 4 -1.6 4.7 0.5 C3.8 2.6 2.2 3.5 0.3 3.5 C-1.8 3.5 -3.4 2.5 -4.6 0.5 Z" fill="#fff"/>
<circle cx="0.2" cy="0" r="2.75" fill="#000"/>
<circle cx="-0.6" cy="-1" r="0.8" fill="#fff" opacity="0.7"/>
</g><g transform="translate(1440,220.3)"><path d="M2 6 V3.8 A3 3 0 0 1 8 3.8 V6" fill="none" stroke="#b4b4b4" stroke-width="1.5"/><rect x="0" y="5.6" width="10" height="7.4" fill="#b4b4b4"/></g></svg>
<span class="t" style="left:1183.50px;top:158.30px;font-size:13px;line-height:17px;color:#111;font-family:'Liberation Sans',sans-serif;letter-spacing:-0.530px;">0</span>
<span class="t" style="left:1183.20px;top:178.30px;font-size:13px;line-height:17px;color:#111;font-family:'Liberation Sans',sans-serif;letter-spacing:0.030px;">Center</span>
<span class="t" style="left:1183.00px;top:198.30px;font-size:13px;line-height:17px;color:#111;font-family:'Liberation Sans',sans-serif;letter-spacing:0.134px;">Hidden</span>
<span class="t" style="left:1183.00px;top:218.30px;font-size:13px;line-height:17px;color:#111;font-family:'Liberation Sans',sans-serif;letter-spacing:0.077px;">Visible</span>
<div class="a" style="left:1454.5px;top:108px;width:45.5px;height:690px;background:linear-gradient(90deg,#d6d6d6 0%,#e9e9e9 8%,#e2e2e2 50%,#c8c8c8 100%);"></div>
<div class="a" style="left:1453.5px;top:108px;width:1px;height:690px;background:#e9e9e9;"></div>
<svg style="left:0;top:0" width="1500" height="520"><rect x="1462" y="116" width="2" height="2" fill="#ababab"/><rect x="1468" y="116" width="2" height="2" fill="#ababab"/><rect x="1474" y="116" width="2" height="2" fill="#ababab"/><rect x="1480" y="116" width="2" height="2" fill="#ababab"/><rect x="1486" y="116" width="2" height="2" fill="#ababab"/><rect x="1456.2" y="120.2" width="43.8" height="42.5" rx="5" fill="#b4b4b4"/><rect x="1456.2" y="417.2" width="43.8" height="42.5" rx="5" fill="#b4b4b4"/><line x1="1458" y1="261.5" x2="1499" y2="261.5" stroke="#555" stroke-width="1" stroke-dasharray="1 2" shape-rendering="crispEdges"/><line x1="1458" y1="409.5" x2="1499" y2="409.5" stroke="#555" stroke-width="1" stroke-dasharray="1 2" shape-rendering="crispEdges"/><rect x="1463.5" y="127.5" width="27" height="27" fill="#fff" stroke="#111" stroke-width="1"/><rect x="1463" y="127" width="28" height="4.8" fill="#000"/><rect x="1464.2" y="128" width="3" height="3" fill="#fff"/><rect x="1463.5" y="174.6" width="27" height="27" fill="#fff" stroke="#111" stroke-width="1"/><rect x="1463" y="174.1" width="28" height="4.8" fill="#000"/><rect x="1464.2" y="175.1" width="3" height="3" fill="#fff"/><rect x="1463.5" y="220.4" width="27" height="27" fill="#fff" stroke="#111" stroke-width="1"/><rect x="1463" y="219.9" width="28" height="4.8" fill="#000"/><rect x="1464.2" y="220.9" width="3" height="3" fill="#fff"/><rect x="1463.5" y="276.6" width="27" height="27" fill="#fff" stroke="#111" stroke-width="1"/><rect x="1463" y="276.1" width="28" height="4.8" fill="#000"/><rect x="1464.2" y="277.1" width="3" height="3" fill="#fff"/><rect x="1463.5" y="322.5" width="27" height="27" fill="#fff" stroke="#111" stroke-width="1"/><rect x="1463" y="322" width="28" height="4.8" fill="#000"/><rect x="1464.2" y="323" width="3" height="3" fill="#fff"/><rect x="1463.5" y="368.7" width="27" height="27" fill="#fff" stroke="#111" stroke-width="1"/><rect x="1463" y="368.2" width="28" height="4.8" fill="#000"/><rect x="1464.2" y="369.2" width="3" height="3" fill="#fff"/><rect x="1463.5" y="424.8" width="27" height="27" fill="#fff" stroke="#111" stroke-width="1"/><rect x="1463" y="424.3" width="28" height="4.8" fill="#000"/><rect x="1464.2" y="425.3" width="3" height="3" fill="#fff"/><rect x="1463.5" y="471.9" width="27" height="27" fill="#fff" stroke="#111" stroke-width="1"/><rect x="1463" y="471.4" width="28" height="4.8" fill="#000"/><rect x="1464.2" y="472.4" width="3" height="3" fill="#fff"/><g transform="translate(1463,127)"><path d="M7.4 13 L13.6 9.6 L13.6 17.6 L7.4 21 Z" fill="#8c8c8c" stroke="#555" stroke-width="0.5"/><path d="M9.6 12.6 L16.6 8.8 L16.6 18 L9.6 21.8 Z" fill="#bdbdbd" stroke="#666" stroke-width="0.5"/><path d="M12 12.8 L20.6 8.4 L20.6 18.6 L12 23 Z" fill="#fafafa" stroke="#666" stroke-width="0.6"/><path d="M14 20.4 L18.6 11.4 L18.8 17.6 Z" fill="none" stroke="#f03030" stroke-width="0.8"/></g><g transform="translate(1463,174.1)"><rect x="7.2" y="10.4" width="10.8" height="7.2" fill="#fbf0c4" stroke="#555" stroke-width="0.7"/><circle cx="16" cy="16.8" r="4.4" fill="#fbf0c4" stroke="#555" stroke-width="0.7"/><path d="M11.6 17.6 H18 V12.6" fill="none" stroke="#555" stroke-width="0.7"/></g><rect x="1468.2" y="229.9" width="17.2" height="11.6" rx="2.4" fill="#f6f6f3" stroke="#c3d2ea" stroke-width="0.9"/><rect x="1466.2" y="284.5" width="4.8" height="3.4" rx="0.8" fill="#000"/><rect x="1473.4" y="284.70000000000005" width="14.2" height="3" fill="#fff" stroke="#333" stroke-width="0.7"/><rect x="1466.2" y="290.5" width="4.8" height="3.4" rx="0.8" fill="#000"/><rect x="1473.4" y="290.70000000000005" width="14.2" height="3" fill="#fff" stroke="#333" stroke-width="0.7"/><rect x="1466.2" y="296.5" width="4.8" height="3.4" rx="0.8" fill="#000"/><rect x="1473.4" y="296.70000000000005" width="14.2" height="3" fill="#fff" stroke="#333" stroke-width="0.7"/><g transform="translate(1463,322)"><path d="M6.6 10.4 L21.4 10.4 L15.4 17 L15.4 23 L12.8 21.8 L12.8 17 Z" fill="#9a9a9a" stroke="#555" stroke-width="0.6"/><ellipse cx="14" cy="10.2" rx="7.4" ry="1.7" fill="#6e6e6e" stroke="#444" stroke-width="0.5"/><path d="M13.2 17 L13.2 21.6" stroke="#d8d8d8" stroke-width="0.8"/></g><g transform="translate(1463,368.2)"><path d="M6 8.8 L10.6 11.6 L10.6 19.6 L6 22.6 Z" fill="#f4f4f4" stroke="#444" stroke-width="0.7"/><rect x="10.6" y="12" width="11.4" height="7.4" rx="1.4" fill="#8e8e8e"/><rect x="10.8" y="12.6" width="3" height="6.4" fill="#f8f8f8"/><rect x="14" y="12" width="2.4" height="7.4" fill="#b9b9b9"/><path d="M4 15.7 H24" stroke="#ff8a8a" stroke-width="0.8" stroke-dasharray="3 1 1 1"/></g><rect x="1465.6" y="432.1" width="14" height="1.4" fill="#9a9a9a" opacity="0.85"/><rect x="1465.6" y="435.45000000000005" width="11" height="1.4" fill="#9a9a9a" opacity="0.85"/><rect x="1465.6" y="438.8" width="14.6" height="1.4" fill="#9a9a9a" opacity="0.85"/><rect x="1465.6" y="442.15000000000003" width="15.4" height="1.4" fill="#9a9a9a" opacity="0.85"/><path d="M1463.5 446.7 H1490.5" stroke="#111" stroke-width="0.9"/><rect x="1472.4" y="448.3" width="15.6" height="1.6" fill="#777"/><path d="M1467 447.90000000000003 l-1.4 1.2 l1.4 1.2" fill="none" stroke="#555" stroke-width="0.6"/><g transform="translate(1463,471.4)"><rect x="7.4" y="8.8" width="13" height="14" rx="0.8" fill="#c48632" stroke="#8a5a1a" stroke-width="0.5"/><rect x="9" y="10.6" width="9.8" height="11.2" fill="#f1f1f1"/><path d="M10.4 13 h7 M10.4 15 h7 M10.4 17 h7 M10.4 19 h4" stroke="#cfcfcf" stroke-width="0.7"/><path d="M18.8 18.6 L15.8 21.8 L18.8 21.8 Z" fill="#9a9a9a"/><rect x="10.8" y="8" width="6.2" height="2.6" rx="0.6" fill="#9c9c90"/><rect x="12.2" y="7" width="3.4" height="1.6" fill="#aaaa9e"/></g></svg>
<div class="a" style="left:281px;top:737px;width:633px;height:8px;border-radius:4px;background:#7f7f7f;"></div>
<div class="a" style="left:1143px;top:285.2px;width:8px;height:315.8px;border-radius:4px;background:#7f7f7f;"></div>
<div class="a" style="left:71.2px;top:731px;width:23.8px;height:18px;background:#ececec;"></div>
<div class="a" style="left:1099px;top:733px;width:55px;height:15px;background:#ececec;"></div>
<span class="t" style="left:1119.40px;top:733.24px;font-size:12px;line-height:16px;color:#111;font-family:'Liberation Sans',sans-serif;letter-spacing:-0.016px;">1 &lt; 10</span>
<div class="a" style="left:71.2px;top:748px;width:1083.3px;height:1.6px;background:#cdcdcd;"></div>
<div class="a" style="left:72.6px;top:749.6px;width:1080.9px;height:20.4px;background:#fff;"></div>
<div class="a" style="left:71.2px;top:770px;width:1083.3px;height:1.5px;background:#c9c9c9;"></div>
<div class="a" style="left:71.2px;top:771.5px;width:1083.3px;height:26.5px;background:#ececec;"></div>
<div class="a" style="left:153px;top:776px;width:974px;height:18px;background:#fff;"></div>
<div class="a" style="left:1127.5px;top:772.3px;width:25px;height:26px;background:#f1f1f1;border:1px solid #c6c6c6;box-sizing:border-box;"></div>
<svg style="left:1130px;top:776px" width="20" height="18"><rect x="3.7" y="4.7" width="13" height="9" fill="#f4f4f4" stroke="#777" stroke-width="0.9"/><rect x="3.2" y="4.2" width="14" height="2.8" fill="#111"/><rect x="13.4" y="5" width="1.2" height="0.8" fill="#aaa"/></svg>
<span class="t" style="left:77.60px;top:749.40px;font-size:13px;line-height:17px;color:#0000e6;font-family:'Liberation Sans',sans-serif;letter-spacing:0.043px;font-style:italic;">Commande:</span>
<span class="t" style="left:153.00px;top:749.40px;font-size:13px;line-height:17px;color:#0000e6;font-family:'Liberation Sans',sans-serif;letter-spacing:0.050px;">new</span>
<span class="t" style="left:73.60px;top:777.00px;font-size:13px;line-height:17px;color:#111;font-family:'Liberation Sans',sans-serif;letter-spacing:-0.002px;">Commande :</span>
<div class="a" style="left:0;top:797.6px;width:1500px;height:1px;background:#d2d2d2;"></div>
<span class="t" style="left:2.20px;top:806.67px;font-size:9.6px;line-height:12px;color:#101010;font-family:'Liberation Sans',sans-serif;letter-spacing:-0.245px;-webkit-text-stroke:0.15px #101010;">10,18</span>
<span class="t" style="left:2.20px;top:827.07px;font-size:9.6px;line-height:12px;color:#101010;font-family:'Liberation Sans',sans-serif;letter-spacing:0.182px;-webkit-text-stroke:0.15px #101010;">@0,-2</span>
<span class="t" style="left:257.00px;top:806.67px;font-size:9.6px;line-height:12px;color:#101010;font-family:'Liberation Sans',sans-serif;letter-spacing:0.125px;-webkit-text-stroke:0.15px #101010;">20.5913&lt;61°</span>
<span class="t" style="left:257.00px;top:827.07px;font-size:9.6px;line-height:12px;color:#101010;font-family:'Liberation Sans',sans-serif;letter-spacing:-0.078px;-webkit-text-stroke:0.15px #101010;">@2&lt;270°</span>
<div class="a" style="left:253.2px;top:802px;width:1px;height:40px;background:#9c9c9c;"></div><div class="a" style="left:254.2px;top:802px;width:1px;height:40px;background:#f2f2f2;"></div>
<span class="t" style="left:532.00px;top:810.77px;font-size:9.6px;line-height:12px;color:#101010;font-family:'Liberation Sans',sans-serif;letter-spacing:0.289px;-webkit-text-stroke:0.15px #101010;">Sélectionne une entité ou une région</span>
<span class="t" style="left:553.60px;top:821.77px;font-size:9.6px;line-height:12px;color:#101010;font-family:'Liberation Sans',sans-serif;letter-spacing:0.292px;-webkit-text-stroke:0.15px #101010;">Déplacer l’entité ou la référence</span>
<span class="t" style="left:949.40px;top:810.77px;font-size:9.6px;line-height:12px;color:#101010;font-family:'Liberation Sans',sans-serif;letter-spacing:0.276px;-webkit-text-stroke:0.15px #101010;">Entités sélectionnées :</span>
<span class="t" style="left:949.40px;top:821.77px;font-size:9.6px;line-height:12px;color:#101010;font-family:'Liberation Sans',sans-serif;letter-spacing:0.323px;-webkit-text-stroke:0.15px #101010;">4 Lignes sur calque "Visible".</span>
<svg style="left:0;top:0" width="1500" height="844"><circle cx="509.4" cy="822" r="2.6" fill="#c6c6c6"/><circle cx="943.4" cy="822" r="2.6" fill="#c6c6c6"/><circle cx="1272.5" cy="822" r="2.6" fill="#c6c6c6"/><g fill="#fff" stroke="#333" stroke-width="0.8"><path d="M717.8 818.6 V814 Q717.8 806.4 726.2 806.4 Q734.6 806.4 734.6 814 V818.6 Z"/><path d="M717.8 818.6 H734.6 V827 Q734.6 835.4 726.2 835.4 Q717.8 835.4 717.8 827 Z"/><path d="M726.2 806.4 V808.4 M726.2 815.4 V818.6" fill="none"/><rect x="725" y="808.2" width="2.4" height="7.2" rx="1.2"/></g></svg>
</body></html>
